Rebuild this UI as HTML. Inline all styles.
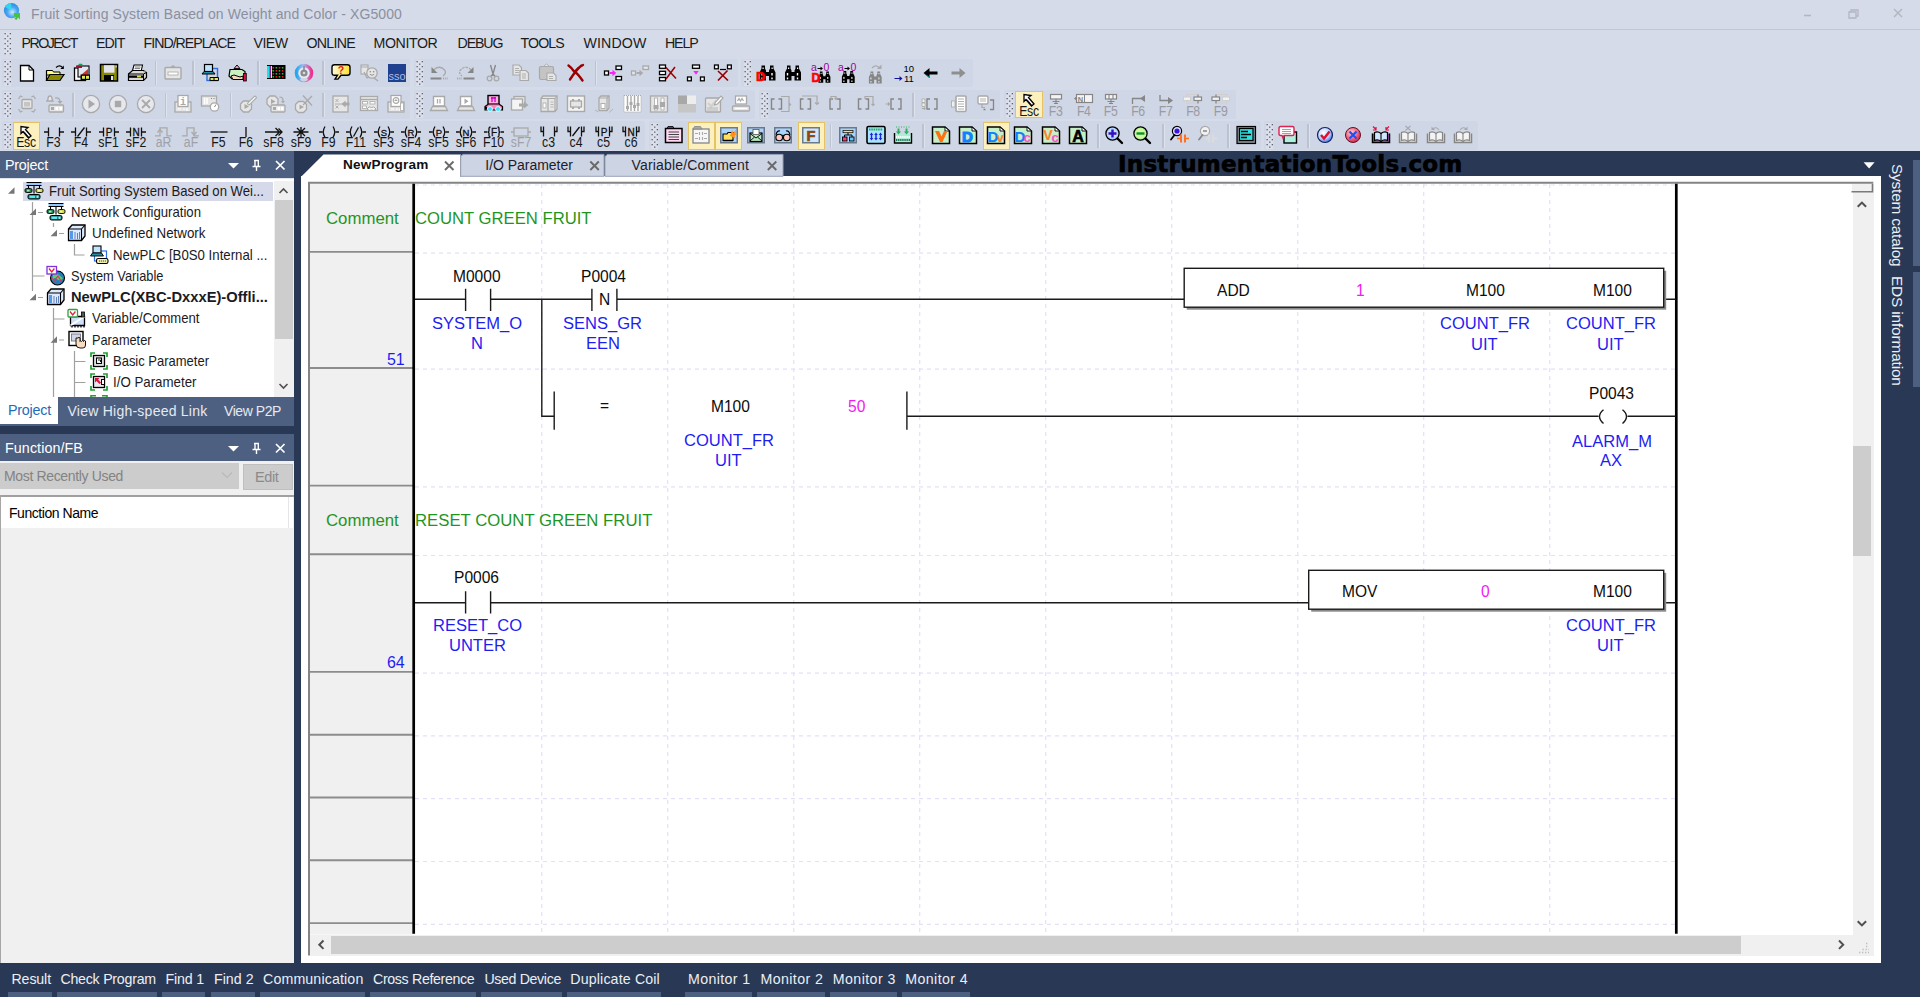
<!DOCTYPE html>
<html><head><meta charset="utf-8"><title>Fruit Sorting System Based on Weight and Color - XG5000</title>
<style>
html,body{margin:0;padding:0}
body{width:1920px;height:997px;position:relative;overflow:hidden;background:#d6dbe9;font-family:"Liberation Sans",sans-serif}
.t{position:absolute;white-space:pre;line-height:1}
.b{position:absolute}
svg{position:absolute;overflow:visible}
.lad text{font-family:"Liberation Sans",sans-serif}
</style></head><body>

<!-- title bar -->
<svg style="left:3px;top:2px" width="20" height="20" viewBox="0 0 20 20">
<defs><radialGradient id="gl" cx="0.55" cy="0.6" r="0.65"><stop offset="0" stop-color="#cfe8ff"/><stop offset="0.5" stop-color="#4aa6f2"/><stop offset="1" stop-color="#1f86e0"/></radialGradient></defs>
<circle cx="8.5" cy="8.6" r="7.6" fill="url(#gl)"/>
<path d="M8.5 8.6 L2 5 A7.6 7.6 0 0 1 8.2 1 Z" fill="#2ee0f0" opacity="0.85"/>
<path d="M11 11 h6 v6.5 l-2 -2 l-1.5 2.6 l-2 -1 l1.5 -2.5 h-2z" fill="#43c63c"/>
</svg>
<span class="t" style="left:31.00px;top:6.95px;font-size:14px;color:#8a90a0;letter-spacing:0.100px;">Fruit Sorting System Based on Weight and Color - XG5000</span>
<div class="b" style="left:0px;top:29px;width:1920px;height:1px;background:#c3c7d1;"></div>
<svg style="left:1795px;top:4px" width="120" height="20" viewBox="0 0 120 20" fill="none" stroke="#b3b7c1" stroke-width="1.3">
<path d="M9 11.5 h7" stroke-width="1.6"/>
<path d="M54 8 h7 v6 h-7z M56 8 v-2 h7 v6 h-2"/>
<path d="M99 5 l8 8 M107 5 l-8 8" stroke-width="1.5"/>
</svg>
<!-- menu bar -->
<svg style="left:3.5px;top:32px" width="8" height="22.5" viewBox="0 0 8 22.5"><rect x="-0.3" y="0" width="7.600" height="22.5" fill="#dde1ec" opacity="0.8"/><g fill="#5d616b"><rect x="0.5" y="1.0" width="1.3" height="1.3"/><rect x="5.7" y="1.0" width="1.3" height="1.3"/><rect x="3.1" y="3.5" width="1.3" height="1.3"/><rect x="0.5" y="6.0" width="1.3" height="1.3"/><rect x="5.7" y="6.0" width="1.3" height="1.3"/><rect x="3.1" y="8.5" width="1.3" height="1.3"/><rect x="0.5" y="11.0" width="1.3" height="1.3"/><rect x="5.7" y="11.0" width="1.3" height="1.3"/><rect x="3.1" y="13.5" width="1.3" height="1.3"/><rect x="0.5" y="16.0" width="1.3" height="1.3"/><rect x="5.7" y="16.0" width="1.3" height="1.3"/><rect x="3.1" y="18.5" width="1.3" height="1.3"/><rect x="0.5" y="21.0" width="1.3" height="1.3"/><rect x="5.7" y="21.0" width="1.3" height="1.3"/></g></svg>
<span class="t" style="left:21.50px;top:35.58px;font-size:14.2px;color:#1b1b1b;letter-spacing:-1.539px;">PROJECT</span>
<span class="t" style="left:96.00px;top:35.58px;font-size:14.2px;color:#1b1b1b;letter-spacing:-0.961px;">EDIT</span>
<span class="t" style="left:143.50px;top:35.58px;font-size:14.2px;color:#1b1b1b;letter-spacing:-0.989px;">FIND/REPLACE</span>
<span class="t" style="left:253.50px;top:35.58px;font-size:14.2px;color:#1b1b1b;letter-spacing:-0.573px;">VIEW</span>
<span class="t" style="left:306.50px;top:35.58px;font-size:14.2px;color:#1b1b1b;letter-spacing:-0.728px;">ONLINE</span>
<span class="t" style="left:373.50px;top:35.58px;font-size:14.2px;color:#1b1b1b;letter-spacing:-0.399px;">MONITOR</span>
<span class="t" style="left:457.50px;top:35.58px;font-size:14.2px;color:#1b1b1b;letter-spacing:-1.100px;">DEBUG</span>
<span class="t" style="left:520.50px;top:35.58px;font-size:14.2px;color:#1b1b1b;letter-spacing:-0.875px;">TOOLS</span>
<span class="t" style="left:583.50px;top:35.58px;font-size:14.2px;color:#1b1b1b;letter-spacing:0.116px;">WINDOW</span>
<span class="t" style="left:665.00px;top:35.58px;font-size:14.2px;color:#1b1b1b;letter-spacing:-1.149px;">HELP</span>
<!-- toolbars -->
<div class="b" style="left:2px;top:58.8px;width:408px;height:28.5px;background:#cfd6e5;border-radius:2px;"></div>
<div class="b" style="left:414px;top:58.8px;width:323.5px;height:28.5px;background:#cfd6e5;border-radius:2px;"></div>
<div class="b" style="left:741px;top:58.8px;width:231.5px;height:28.5px;background:#cfd6e5;border-radius:2px;"></div>
<div class="b" style="left:2px;top:90px;width:408px;height:28.5px;background:#cfd6e5;border-radius:2px;"></div>
<div class="b" style="left:414px;top:90px;width:341px;height:28.5px;background:#cfd6e5;border-radius:2px;"></div>
<div class="b" style="left:759px;top:90px;width:241px;height:28.5px;background:#cfd6e5;border-radius:2px;"></div>
<div class="b" style="left:1004px;top:90px;width:231.5999999999999px;height:28.5px;background:#cfd6e5;border-radius:2px;"></div>
<div class="b" style="left:2px;top:121.3px;width:643px;height:28.5px;background:#cfd6e5;border-radius:2px;"></div>
<div class="b" style="left:649px;top:121.3px;width:611.5999999999999px;height:28.5px;background:#cfd6e5;border-radius:2px;"></div>
<div class="b" style="left:1264px;top:121.3px;width:214px;height:28.5px;background:#cfd6e5;border-radius:2px;"></div>
<svg style="left:3.5px;top:60px" width="8" height="26" viewBox="0 0 8 26"><rect x="-0.3" y="0" width="7.600" height="26" fill="#dde1ec" opacity="0.8"/><g fill="#5d616b"><rect x="0.5" y="1.0" width="1.3" height="1.3"/><rect x="5.7" y="1.0" width="1.3" height="1.3"/><rect x="3.1" y="3.5" width="1.3" height="1.3"/><rect x="0.5" y="6.0" width="1.3" height="1.3"/><rect x="5.7" y="6.0" width="1.3" height="1.3"/><rect x="3.1" y="8.5" width="1.3" height="1.3"/><rect x="0.5" y="11.0" width="1.3" height="1.3"/><rect x="5.7" y="11.0" width="1.3" height="1.3"/><rect x="3.1" y="13.5" width="1.3" height="1.3"/><rect x="0.5" y="16.0" width="1.3" height="1.3"/><rect x="5.7" y="16.0" width="1.3" height="1.3"/><rect x="3.1" y="18.5" width="1.3" height="1.3"/><rect x="0.5" y="21.0" width="1.3" height="1.3"/><rect x="5.7" y="21.0" width="1.3" height="1.3"/><rect x="3.1" y="23.5" width="1.3" height="1.3"/></g></svg>
<svg style="left:416px;top:60px" width="8" height="26" viewBox="0 0 8 26"><rect x="-0.3" y="0" width="7.600" height="26" fill="#dde1ec" opacity="0.8"/><g fill="#5d616b"><rect x="0.5" y="1.0" width="1.3" height="1.3"/><rect x="5.7" y="1.0" width="1.3" height="1.3"/><rect x="3.1" y="3.5" width="1.3" height="1.3"/><rect x="0.5" y="6.0" width="1.3" height="1.3"/><rect x="5.7" y="6.0" width="1.3" height="1.3"/><rect x="3.1" y="8.5" width="1.3" height="1.3"/><rect x="0.5" y="11.0" width="1.3" height="1.3"/><rect x="5.7" y="11.0" width="1.3" height="1.3"/><rect x="3.1" y="13.5" width="1.3" height="1.3"/><rect x="0.5" y="16.0" width="1.3" height="1.3"/><rect x="5.7" y="16.0" width="1.3" height="1.3"/><rect x="3.1" y="18.5" width="1.3" height="1.3"/><rect x="0.5" y="21.0" width="1.3" height="1.3"/><rect x="5.7" y="21.0" width="1.3" height="1.3"/><rect x="3.1" y="23.5" width="1.3" height="1.3"/></g></svg>
<svg style="left:743.5px;top:60px" width="8" height="26" viewBox="0 0 8 26"><rect x="-0.3" y="0" width="7.600" height="26" fill="#dde1ec" opacity="0.8"/><g fill="#5d616b"><rect x="0.5" y="1.0" width="1.3" height="1.3"/><rect x="5.7" y="1.0" width="1.3" height="1.3"/><rect x="3.1" y="3.5" width="1.3" height="1.3"/><rect x="0.5" y="6.0" width="1.3" height="1.3"/><rect x="5.7" y="6.0" width="1.3" height="1.3"/><rect x="3.1" y="8.5" width="1.3" height="1.3"/><rect x="0.5" y="11.0" width="1.3" height="1.3"/><rect x="5.7" y="11.0" width="1.3" height="1.3"/><rect x="3.1" y="13.5" width="1.3" height="1.3"/><rect x="0.5" y="16.0" width="1.3" height="1.3"/><rect x="5.7" y="16.0" width="1.3" height="1.3"/><rect x="3.1" y="18.5" width="1.3" height="1.3"/><rect x="0.5" y="21.0" width="1.3" height="1.3"/><rect x="5.7" y="21.0" width="1.3" height="1.3"/><rect x="3.1" y="23.5" width="1.3" height="1.3"/></g></svg>
<svg style="left:3.5px;top:91.5px" width="8" height="26" viewBox="0 0 8 26"><rect x="-0.3" y="0" width="7.600" height="26" fill="#dde1ec" opacity="0.8"/><g fill="#5d616b"><rect x="0.5" y="1.0" width="1.3" height="1.3"/><rect x="5.7" y="1.0" width="1.3" height="1.3"/><rect x="3.1" y="3.5" width="1.3" height="1.3"/><rect x="0.5" y="6.0" width="1.3" height="1.3"/><rect x="5.7" y="6.0" width="1.3" height="1.3"/><rect x="3.1" y="8.5" width="1.3" height="1.3"/><rect x="0.5" y="11.0" width="1.3" height="1.3"/><rect x="5.7" y="11.0" width="1.3" height="1.3"/><rect x="3.1" y="13.5" width="1.3" height="1.3"/><rect x="0.5" y="16.0" width="1.3" height="1.3"/><rect x="5.7" y="16.0" width="1.3" height="1.3"/><rect x="3.1" y="18.5" width="1.3" height="1.3"/><rect x="0.5" y="21.0" width="1.3" height="1.3"/><rect x="5.7" y="21.0" width="1.3" height="1.3"/><rect x="3.1" y="23.5" width="1.3" height="1.3"/></g></svg>
<svg style="left:416px;top:91.5px" width="8" height="26" viewBox="0 0 8 26"><rect x="-0.3" y="0" width="7.600" height="26" fill="#dde1ec" opacity="0.8"/><g fill="#5d616b"><rect x="0.5" y="1.0" width="1.3" height="1.3"/><rect x="5.7" y="1.0" width="1.3" height="1.3"/><rect x="3.1" y="3.5" width="1.3" height="1.3"/><rect x="0.5" y="6.0" width="1.3" height="1.3"/><rect x="5.7" y="6.0" width="1.3" height="1.3"/><rect x="3.1" y="8.5" width="1.3" height="1.3"/><rect x="0.5" y="11.0" width="1.3" height="1.3"/><rect x="5.7" y="11.0" width="1.3" height="1.3"/><rect x="3.1" y="13.5" width="1.3" height="1.3"/><rect x="0.5" y="16.0" width="1.3" height="1.3"/><rect x="5.7" y="16.0" width="1.3" height="1.3"/><rect x="3.1" y="18.5" width="1.3" height="1.3"/><rect x="0.5" y="21.0" width="1.3" height="1.3"/><rect x="5.7" y="21.0" width="1.3" height="1.3"/><rect x="3.1" y="23.5" width="1.3" height="1.3"/></g></svg>
<svg style="left:761px;top:91.5px" width="8" height="26" viewBox="0 0 8 26"><rect x="-0.3" y="0" width="7.600" height="26" fill="#dde1ec" opacity="0.8"/><g fill="#5d616b"><rect x="0.5" y="1.0" width="1.3" height="1.3"/><rect x="5.7" y="1.0" width="1.3" height="1.3"/><rect x="3.1" y="3.5" width="1.3" height="1.3"/><rect x="0.5" y="6.0" width="1.3" height="1.3"/><rect x="5.7" y="6.0" width="1.3" height="1.3"/><rect x="3.1" y="8.5" width="1.3" height="1.3"/><rect x="0.5" y="11.0" width="1.3" height="1.3"/><rect x="5.7" y="11.0" width="1.3" height="1.3"/><rect x="3.1" y="13.5" width="1.3" height="1.3"/><rect x="0.5" y="16.0" width="1.3" height="1.3"/><rect x="5.7" y="16.0" width="1.3" height="1.3"/><rect x="3.1" y="18.5" width="1.3" height="1.3"/><rect x="0.5" y="21.0" width="1.3" height="1.3"/><rect x="5.7" y="21.0" width="1.3" height="1.3"/><rect x="3.1" y="23.5" width="1.3" height="1.3"/></g></svg>
<svg style="left:1005.6px;top:91.5px" width="8" height="26" viewBox="0 0 8 26"><rect x="-0.3" y="0" width="7.600" height="26" fill="#dde1ec" opacity="0.8"/><g fill="#5d616b"><rect x="0.5" y="1.0" width="1.3" height="1.3"/><rect x="5.7" y="1.0" width="1.3" height="1.3"/><rect x="3.1" y="3.5" width="1.3" height="1.3"/><rect x="0.5" y="6.0" width="1.3" height="1.3"/><rect x="5.7" y="6.0" width="1.3" height="1.3"/><rect x="3.1" y="8.5" width="1.3" height="1.3"/><rect x="0.5" y="11.0" width="1.3" height="1.3"/><rect x="5.7" y="11.0" width="1.3" height="1.3"/><rect x="3.1" y="13.5" width="1.3" height="1.3"/><rect x="0.5" y="16.0" width="1.3" height="1.3"/><rect x="5.7" y="16.0" width="1.3" height="1.3"/><rect x="3.1" y="18.5" width="1.3" height="1.3"/><rect x="0.5" y="21.0" width="1.3" height="1.3"/><rect x="5.7" y="21.0" width="1.3" height="1.3"/><rect x="3.1" y="23.5" width="1.3" height="1.3"/></g></svg>
<svg style="left:3.5px;top:122.5px" width="8" height="26" viewBox="0 0 8 26"><rect x="-0.3" y="0" width="7.600" height="26" fill="#dde1ec" opacity="0.8"/><g fill="#5d616b"><rect x="0.5" y="1.0" width="1.3" height="1.3"/><rect x="5.7" y="1.0" width="1.3" height="1.3"/><rect x="3.1" y="3.5" width="1.3" height="1.3"/><rect x="0.5" y="6.0" width="1.3" height="1.3"/><rect x="5.7" y="6.0" width="1.3" height="1.3"/><rect x="3.1" y="8.5" width="1.3" height="1.3"/><rect x="0.5" y="11.0" width="1.3" height="1.3"/><rect x="5.7" y="11.0" width="1.3" height="1.3"/><rect x="3.1" y="13.5" width="1.3" height="1.3"/><rect x="0.5" y="16.0" width="1.3" height="1.3"/><rect x="5.7" y="16.0" width="1.3" height="1.3"/><rect x="3.1" y="18.5" width="1.3" height="1.3"/><rect x="0.5" y="21.0" width="1.3" height="1.3"/><rect x="5.7" y="21.0" width="1.3" height="1.3"/><rect x="3.1" y="23.5" width="1.3" height="1.3"/></g></svg>
<svg style="left:651px;top:122.5px" width="8" height="26" viewBox="0 0 8 26"><rect x="-0.3" y="0" width="7.600" height="26" fill="#dde1ec" opacity="0.8"/><g fill="#5d616b"><rect x="0.5" y="1.0" width="1.3" height="1.3"/><rect x="5.7" y="1.0" width="1.3" height="1.3"/><rect x="3.1" y="3.5" width="1.3" height="1.3"/><rect x="0.5" y="6.0" width="1.3" height="1.3"/><rect x="5.7" y="6.0" width="1.3" height="1.3"/><rect x="3.1" y="8.5" width="1.3" height="1.3"/><rect x="0.5" y="11.0" width="1.3" height="1.3"/><rect x="5.7" y="11.0" width="1.3" height="1.3"/><rect x="3.1" y="13.5" width="1.3" height="1.3"/><rect x="0.5" y="16.0" width="1.3" height="1.3"/><rect x="5.7" y="16.0" width="1.3" height="1.3"/><rect x="3.1" y="18.5" width="1.3" height="1.3"/><rect x="0.5" y="21.0" width="1.3" height="1.3"/><rect x="5.7" y="21.0" width="1.3" height="1.3"/><rect x="3.1" y="23.5" width="1.3" height="1.3"/></g></svg>
<svg style="left:1266px;top:122.5px" width="8" height="26" viewBox="0 0 8 26"><rect x="-0.3" y="0" width="7.600" height="26" fill="#dde1ec" opacity="0.8"/><g fill="#5d616b"><rect x="0.5" y="1.0" width="1.3" height="1.3"/><rect x="5.7" y="1.0" width="1.3" height="1.3"/><rect x="3.1" y="3.5" width="1.3" height="1.3"/><rect x="0.5" y="6.0" width="1.3" height="1.3"/><rect x="5.7" y="6.0" width="1.3" height="1.3"/><rect x="3.1" y="8.5" width="1.3" height="1.3"/><rect x="0.5" y="11.0" width="1.3" height="1.3"/><rect x="5.7" y="11.0" width="1.3" height="1.3"/><rect x="3.1" y="13.5" width="1.3" height="1.3"/><rect x="0.5" y="16.0" width="1.3" height="1.3"/><rect x="5.7" y="16.0" width="1.3" height="1.3"/><rect x="3.1" y="18.5" width="1.3" height="1.3"/><rect x="0.5" y="21.0" width="1.3" height="1.3"/><rect x="5.7" y="21.0" width="1.3" height="1.3"/><rect x="3.1" y="23.5" width="1.3" height="1.3"/></g></svg>
<svg style="left:17.00px;top:63.00px" width="20" height="20" viewBox="0 0 20 20"><path d="M3.5 2.5 h8.5 l4.5 4.5 v11 h-13z" fill="#fff" stroke="#000" stroke-width="1.3"/><path d="M12 2.5 v4.5 h4.5" fill="none" stroke="#000" stroke-width="1"/></svg>
<svg style="left:44.50px;top:63.00px" width="20" height="20" viewBox="0 0 20 20"><path d="M1.5 7.5 h6 l1 1.5 h6.5 v3 h-13.5z" fill="#ffff80" stroke="#000" stroke-width="1"/><path d="M1.5 17.5 l3.5 -6 h14 l-4 6z" fill="#8a8a00" stroke="#000" stroke-width="1.2"/><path d="M1.5 17.5 v-10" stroke="#000" stroke-width="1.2"/><path d="M11 4.5 q4 -3.5 7 0.5" fill="none" stroke="#000" stroke-width="1.2"/><path d="M18.8 2.5 v3.5 h-3.5z" fill="#000"/></svg>
<svg style="left:72.00px;top:63.00px" width="20" height="20" viewBox="0 0 20 20"><rect x="2.5" y="5" width="11" height="12.5" fill="#fff" stroke="#000" stroke-width="1.3"/><rect x="6" y="3" width="11" height="11" fill="#dfe8f5" stroke="#000" stroke-width="1.1"/><rect x="4" y="2.5" width="6" height="2.5" fill="#a01030"/><rect x="6.5" y="0.8" width="4" height="1.8" rx="0.9" fill="#10a060"/><path d="M9 12 l7 -6 v6z" fill="#d03030"/><rect x="8.5" y="11.5" width="9.5" height="5.5" fill="#000"/><rect x="10" y="12.8" width="3" height="3" fill="#d8e860"/><rect x="14" y="12.8" width="3" height="3" fill="#d8e860"/></svg>
<svg style="left:99.00px;top:63.00px" width="20" height="20" viewBox="0 0 20 20"><rect x="1.5" y="1.5" width="17" height="16.5" fill="#8a8a00" stroke="#000" stroke-width="1.5"/><rect x="5" y="2.2" width="10.5" height="7.5" fill="#e4e4ec"/><rect x="5" y="12" width="10" height="6" fill="#000"/><rect x="12" y="13" width="2.3" height="4" fill="#e4e4ec"/><rect x="16.5" y="2.5" width="1.2" height="2" fill="#e4e4ec"/></svg>
<svg style="left:126.50px;top:63.00px" width="20" height="20" viewBox="0 0 20 20"><path d="M5.5 7.5 l1.5 -5.5 h8.5 l-1.2 5.5z" fill="#fff" stroke="#000" stroke-width="1.1"/><path d="M8 4 h5.5 M7.6 5.6 h5.5" stroke="#555" stroke-width="0.8"/><path d="M1.5 11 l4 -3.5 h11 l3 2 v5 l-3 3 h-15z" fill="#d9d9d9" stroke="#000" stroke-width="1.2"/><path d="M1.5 11 h15 l3 -1.5 M16.5 11 v6.5" stroke="#000" stroke-width="1" fill="none"/><rect x="2" y="12.5" width="14.5" height="2.3" fill="#000"/><rect x="10" y="12.6" width="4" height="1.8" fill="#e0e040"/><circle cx="17.8" cy="8.5" r="1.1" fill="#888"/></svg>
<div class="b" style="left:154.8px;top:61px;width:1.4px;height:24px;background:#bcc2d0;"></div><div class="b" style="left:156.2px;top:61px;width:1px;height:24px;background:#dfe3ee;"></div>
<svg style="left:163.00px;top:63.00px" width="20" height="20" viewBox="0 0 20 20"><rect x="2" y="4.5" width="16" height="11.5" rx="1" fill="#e6e6e6" stroke="#a9a9a9" stroke-width="1.4"/><path d="M7 4.5 l3 -2.5 l3 2.5z" fill="#a9a9a9"/><rect x="5" y="9" width="10" height="3" fill="#fff" stroke="#a9a9a9" stroke-width="0.8"/></svg>
<div class="b" style="left:192.3px;top:61px;width:1.4px;height:24px;background:#bcc2d0;"></div><div class="b" style="left:193.7px;top:61px;width:1px;height:24px;background:#dfe3ee;"></div>
<svg style="left:200.00px;top:63.00px" width="20" height="20" viewBox="0 0 20 20"><rect x="7" y="5.5" width="10.5" height="12" fill="none" stroke="#2a6fe8" stroke-width="1.4"/><rect x="4.5" y="1.5" width="8" height="7" fill="#bfe4ff" stroke="#000" stroke-width="1.2"/><path d="M2 11 l2 -2.5 h9 l2 2.5z" fill="#2a8aa0" stroke="#000" stroke-width="1"/><rect x="9.5" y="14" width="9.5" height="4" rx="1" fill="#000"/><rect x="10.5" y="15" width="3" height="2" fill="#d8e860"/><rect x="14.5" y="15" width="3.5" height="2" fill="#d8e860"/></svg>
<svg style="left:228.00px;top:63.00px" width="20" height="20" viewBox="0 0 20 20"><path d="M2 6.5 h12 l3 2 v4.5 l-6 3 h-7 l-3 -3z" fill="#c8f0c0" stroke="#000" stroke-width="1.2"/><path d="M6 5.5 l3 -3.5 l3 3.5z" fill="#f0a0c0" stroke="#000" stroke-width="0.9"/><path d="M3 13 q3 -2 6 0 t6 0 v3.5 h-10z" fill="#f4d8b8" stroke="#000" stroke-width="1"/><rect x="15.5" y="10.5" width="2.8" height="7.5" fill="#d01040" stroke="#000" stroke-width="0.8"/></svg>
<div class="b" style="left:257.3px;top:61px;width:1.4px;height:24px;background:#bcc2d0;"></div><div class="b" style="left:258.7px;top:61px;width:1px;height:24px;background:#dfe3ee;"></div>
<svg style="left:265.60px;top:63.00px" width="20" height="20" viewBox="0 0 20 20"><rect x="1" y="2" width="18.5" height="14" fill="#000"/><rect x="1" y="3" width="2" height="12" fill="#20e0e0"/><rect x="3" y="3" width="1.6" height="12" fill="#e040e0"/><rect x="5" y="3" width="1" height="12" fill="#ddd"/><rect x="6.5" y="4.0" width="1.6" height="1.6" fill="#e02020"/><rect x="9.6" y="4.0" width="1.6" height="1.6" fill="#20c020"/><rect x="12.7" y="4.0" width="1.6" height="1.6" fill="#e02020"/><rect x="15.8" y="4.0" width="1.6" height="1.6" fill="#20c020"/><rect x="6.5" y="7.0" width="1.6" height="1.6" fill="#20c020"/><rect x="9.6" y="7.0" width="1.6" height="1.6" fill="#e02020"/><rect x="12.7" y="7.0" width="1.6" height="1.6" fill="#20c020"/><rect x="15.8" y="7.0" width="1.6" height="1.6" fill="#e02020"/><rect x="6.5" y="10.0" width="1.6" height="1.6" fill="#e02020"/><rect x="9.6" y="10.0" width="1.6" height="1.6" fill="#20c020"/><rect x="12.7" y="10.0" width="1.6" height="1.6" fill="#e02020"/><rect x="15.8" y="10.0" width="1.6" height="1.6" fill="#20c020"/><rect x="6.5" y="13.0" width="1.6" height="1.6" fill="#20c020"/><rect x="9.6" y="13.0" width="1.6" height="1.6" fill="#e02020"/><rect x="12.7" y="13.0" width="1.6" height="1.6" fill="#20c020"/><rect x="15.8" y="13.0" width="1.6" height="1.6" fill="#e02020"/></svg>
<svg style="left:293.75px;top:63.00px" width="20" height="20" viewBox="0 0 20 20"><defs><linearGradient id="rg" x1="0" x2="1"><stop offset="0" stop-color="#20a8f0"/><stop offset="0.45" stop-color="#a8b8f0"/><stop offset="1" stop-color="#f03090"/></linearGradient></defs><circle cx="10" cy="10" r="7.6" fill="none" stroke="url(#rg)" stroke-width="3.4"/><circle cx="10" cy="10" r="5.2" fill="#e9ecf3"/><circle cx="10" cy="10" r="3.6" fill="#8b8b93"/><circle cx="10" cy="10" r="1.3" fill="#d9d9e0"/><rect x="9.2" y="3" width="1.6" height="4.5" fill="#8b8b93"/><path d="M6 17 q4 2.5 8 0 l-1 -2 h-6z" fill="#d4d4dc"/></svg>
<div class="b" style="left:322.3px;top:61px;width:1.4px;height:24px;background:#bcc2d0;"></div><div class="b" style="left:323.7px;top:61px;width:1px;height:24px;background:#dfe3ee;"></div>
<svg style="left:330.60px;top:63.00px" width="20" height="20" viewBox="0 0 20 20"><defs><linearGradient id="sg" x1="0" x2="1"><stop offset="0" stop-color="#fffbe0"/><stop offset="1" stop-color="#ffe030"/></linearGradient></defs><path d="M3.5 1.8 h13 q2.5 0 2.5 2.5 v5.5 q0 2.5 -2.5 2.5 h-6.5 l-3 3.8 h-3 l2.5 -3.8 h-3 q-2.5 0 -2.5 -2.5 v-5.500 q0 -2.500 2.500 -2.500z" fill="url(#sg)" stroke="#000" stroke-width="1.4"/><text x="10" y="10.8" font-size="10.5" font-weight="bold" font-family="Liberation Sans,sans-serif" fill="#e02020" text-anchor="middle">?</text></svg>
<svg style="left:359.40px;top:63.00px" width="20" height="20" viewBox="0 0 20 20"><rect x="2" y="2" width="7" height="9" fill="#e6e6e6" stroke="#a9a9a9" stroke-width="1.1"/><path d="M2 4 h7" stroke="#a9a9a9" stroke-width="1"/><path d="M5 9 l3 6 l2 -1" fill="none" stroke="#a9a9a9" stroke-width="1.2"/><circle cx="13" cy="10" r="5.2" fill="#e6e6e6" stroke="#a9a9a9" stroke-width="1.3"/><circle cx="11.3" cy="8.7" r="0.8" fill="#868686"/><circle cx="14.7" cy="8.7" r="0.8" fill="#868686"/><path d="M10.8 11.3 q2.200 2 4.400 0" fill="none" stroke="#868686" stroke-width="0.9"/><path d="M15 15 l4 3" stroke="#a9a9a9" stroke-width="1.4"/></svg>
<div class="b" style="left:387.5px;top:63.7px;width:18.8px;height:18.5px;background:#1f3f8f;"></div>
<span class="t" style="left:388.50px;top:71.29px;font-size:11px;color:#aebce0;letter-spacing:-0.039px;">sso</span>
<svg style="left:428.50px;top:63.00px" width="20" height="20" viewBox="0 0 20 20"><path d="M5 6.5 q6 -5 11 1 q1.5 3 -2 5.5" fill="none" stroke="#a9a9a9" stroke-width="1.3"/><path d="M2.500 4 v6 h6z" fill="#868686"/><rect x="1.5" y="14.5" width="11" height="2" fill="#868686"/><path d="M14 15.500 h5" stroke="#a9a9a9" stroke-width="2" stroke-dasharray="1.2 1"/></svg>
<svg style="left:456.00px;top:63.00px" width="20" height="20" viewBox="0 0 20 20"><path d="M15 6.5 q-6 -5 -11 1 q-1.5 3 2 5.5" fill="none" stroke="#a9a9a9" stroke-width="1.3" stroke-dasharray="2.5 1"/><path d="M17.500 4 v6 h-6z" fill="#868686"/><rect x="7.5" y="14.5" width="11" height="2" fill="#868686"/><path d="M1 15.500 h5" stroke="#a9a9a9" stroke-width="2" stroke-dasharray="1.2 1"/></svg>
<svg style="left:483.00px;top:63.00px" width="20" height="20" viewBox="0 0 20 20"><path d="M7.5 2 l2.5 9 l2.500 -9 M10 11 l-2.500 3 M10 11 l2.500 3" fill="none" stroke="#868686" stroke-width="1.3"/><circle cx="6.5" cy="15.5" r="2.3" fill="none" stroke="#a9a9a9" stroke-width="1.3"/><circle cx="13.5" cy="15.5" r="2.300" fill="none" stroke="#a9a9a9" stroke-width="1.300"/></svg>
<svg style="left:510.60px;top:63.00px" width="20" height="20" viewBox="0 0 20 20"><path d="M2 2 h6 l2.500 2.500 v7.500 h-8.500z" fill="#e6e6e6" stroke="#a9a9a9" stroke-width="1.2"/><path d="M4 5.500 h4 M4 7.500 h4 M4 9.500 h4" stroke="#a9a9a9" stroke-width="0.9"/><path d="M9 7.500 h6 l2.500 2.500 v7.500 h-8.500z" fill="#e6e6e6" stroke="#a9a9a9" stroke-width="1.200"/><path d="M11 11 h4 M11 13 h4 M11 15 h4" stroke="#a9a9a9" stroke-width="0.900"/></svg>
<svg style="left:538.00px;top:63.00px" width="20" height="20" viewBox="0 0 20 20"><rect x="1.5" y="3.5" width="14" height="13" rx="1.500" fill="#c4c4c4" stroke="#a9a9a9" stroke-width="1.2"/><path d="M5.500 3.500 l3 -2.500 l3 2.500z" fill="#e6e6e6" stroke="#a9a9a9" stroke-width="0.9"/><path d="M9 10 h6.500 l2.500 2.500 v5 h-9z" fill="#e6e6e6" stroke="#a9a9a9" stroke-width="1.100"/><path d="M11 13.500 h4 M11 15.500 h4" stroke="#a9a9a9" stroke-width="0.900"/></svg>
<svg style="left:565.60px;top:63.00px" width="20" height="20" viewBox="0 0 20 20"><path d="M2.500 2.500 q3 2 6 6.500 q4 -5 8.500 -7 M15.500 2.500 q-5 4 -11.500 14 M9 9 q3 2 7.500 8.500" fill="none" stroke="#9a0000" stroke-width="2.4" stroke-linecap="round"/></svg>
<div class="b" style="left:594.9px;top:61px;width:1.4px;height:24px;background:#bcc2d0;"></div><div class="b" style="left:596.3000000000001px;top:61px;width:1px;height:24px;background:#dfe3ee;"></div>
<svg style="left:603.00px;top:63.00px" width="20" height="20" viewBox="0 0 20 20"><rect x="1.500" y="8" width="4" height="4" fill="#fff" stroke="#000" stroke-width="1.3"/><rect x="13" y="3" width="5.500" height="3.500" fill="#fff" stroke="#000" stroke-width="1.3"/><rect x="13" y="13.500" width="5.500" height="3.500" fill="#fff" stroke="#000" stroke-width="1.300"/><path d="M6.500 9 h3 v-2.200 l3.700 3.200 l-3.700 3.200 v-2.200 h-3z" fill="#ff20ff"/></svg>
<svg style="left:630.00px;top:63.00px" width="20" height="20" viewBox="0 0 20 20"><rect x="1.500" y="8" width="4" height="4" fill="#e6e6e6" stroke="#a9a9a9" stroke-width="1.3"/><rect x="13" y="3" width="5.500" height="3.500" fill="#e6e6e6" stroke="#a9a9a9" stroke-width="1.3"/><path d="M6.500 9 h3 v-2.200 l3.700 3.200 l-3.700 3.200 v-2.200 h-3z" fill="#a9a9a9"/></svg>
<svg style="left:657.50px;top:63.00px" width="20" height="20" viewBox="0 0 20 20"><rect x="1.500" y="2" width="6" height="3.300" fill="#fff" stroke="#000" stroke-width="1.3"/><rect x="1.500" y="8.300" width="6" height="3.300" fill="#fff" stroke="#000" stroke-width="1.300"/><rect x="1.500" y="14.500" width="6" height="3.300" fill="#fff" stroke="#000" stroke-width="1.300"/><path d="M8 4.500 l10 11 M17 4 l-9 12" stroke="#9a0000" stroke-width="1.500"/></svg>
<svg style="left:685.60px;top:63.00px" width="20" height="20" viewBox="0 0 20 20"><rect x="6.500" y="2" width="7" height="3.300" fill="#fff" stroke="#000" stroke-width="1.300"/><rect x="1.500" y="14" width="3.800" height="3.800" fill="#fff" stroke="#000" stroke-width="1.300"/><rect x="14.500" y="14" width="3.800" height="3.800" fill="#fff" stroke="#000" stroke-width="1.300"/><path d="M7.300 8 h5.400 l-2.700 3.800z" fill="#ff20ff"/></svg>
<svg style="left:713.00px;top:63.00px" width="20" height="20" viewBox="0 0 20 20"><rect x="1.500" y="2" width="3.800" height="3.800" fill="#fff" stroke="#000" stroke-width="1.300"/><rect x="14.500" y="2" width="3.800" height="3.800" fill="#fff" stroke="#000" stroke-width="1.300"/><path d="M7 6.500 h6" stroke="#000" stroke-width="1.2"/><path d="M5 8 l10 9.500 M14.500 7.500 l-9.500 10" stroke="#9a0000" stroke-width="1.700"/></svg>
<svg style="left:755.60px;top:63.00px" width="20" height="20" viewBox="0 0 20 20"><g transform="translate(3 2) scale(1.0)"><path d="M0.500 15.500 v-8 l2 -4 v-3 h3.500 v3 l1 2 v1.500 h3 v-1.500 l1 -2 v-3 h3.500 v3 l2 4 v8 h-6.500 v-4.500 h-3 v4.500z" fill="#000"/><rect x="2.300" y="8" width="1.400" height="2.500" fill="#fff"/><rect x="12.300" y="8" width="1.400" height="2.500" fill="#fff"/><rect x="2.300" y="12.500" width="1.400" height="1.800" fill="#fff"/><rect x="12.300" y="12.500" width="1.400" height="1.800" fill="#fff"/><rect x="3.500" y="2.500" width="1.200" height="1.500" fill="#fff"/><rect x="12.500" y="2.500" width="1.200" height="1.500" fill="#fff"/></g><text x="0" y="18" font-size="13" font-family="Liberation Sans,sans-serif" font-weight="bold" fill="#ff0000" stroke="#ff0000" stroke-width="0.6">D</text></svg>
<svg style="left:783.00px;top:63.00px" width="20" height="20" viewBox="0 0 20 20"><g transform="translate(1.5 2) scale(1.0)"><path d="M0.500 15.500 v-8 l2 -4 v-3 h3.500 v3 l1 2 v1.500 h3 v-1.500 l1 -2 v-3 h3.500 v3 l2 4 v8 h-6.500 v-4.500 h-3 v4.500z" fill="#000"/><rect x="2.300" y="8" width="1.400" height="2.500" fill="#fff"/><rect x="12.300" y="8" width="1.400" height="2.500" fill="#fff"/><rect x="2.300" y="12.500" width="1.400" height="1.800" fill="#fff"/><rect x="12.300" y="12.500" width="1.400" height="1.800" fill="#fff"/><rect x="3.500" y="2.500" width="1.200" height="1.500" fill="#fff"/><rect x="12.500" y="2.500" width="1.200" height="1.500" fill="#fff"/></g></svg>
<svg style="left:810.60px;top:63.00px" width="20" height="20" viewBox="0 0 20 20"><g transform="translate(7 8) scale(0.75)"><path d="M0.500 15.500 v-8 l2 -4 v-3 h3.500 v3 l1 2 v1.500 h3 v-1.500 l1 -2 v-3 h3.500 v3 l2 4 v8 h-6.500 v-4.500 h-3 v4.500z" fill="#000"/><rect x="2.300" y="8" width="1.400" height="2.500" fill="#fff"/><rect x="12.300" y="8" width="1.400" height="2.500" fill="#fff"/><rect x="2.300" y="12.500" width="1.400" height="1.800" fill="#fff"/><rect x="12.300" y="12.500" width="1.400" height="1.800" fill="#fff"/><rect x="3.500" y="2.500" width="1.200" height="1.500" fill="#fff"/><rect x="12.500" y="2.500" width="1.200" height="1.500" fill="#fff"/></g><text x="0" y="8" font-size="10.5" font-family="Liberation Sans,sans-serif" fill="#a000a0">a</text><path d="M6.500 5 h3 v-1.500 l2.500 2 l-2.500 2 v-1.500 h-3z" fill="#000"/><text x="12.500" y="8" font-size="10.500" font-family="Liberation Sans,sans-serif" fill="#a000a0">0</text><text x="0.500" y="19" font-size="12" font-family="Liberation Sans,sans-serif" font-weight="bold" fill="#ff0000" stroke="#ff0000" stroke-width="0.600">D</text></svg>
<svg style="left:838.00px;top:63.00px" width="20" height="20" viewBox="0 0 20 20"><g transform="translate(3.5 7.5) scale(0.8)"><path d="M0.500 15.500 v-8 l2 -4 v-3 h3.500 v3 l1 2 v1.500 h3 v-1.500 l1 -2 v-3 h3.500 v3 l2 4 v8 h-6.500 v-4.500 h-3 v4.500z" fill="#000"/><rect x="2.300" y="8" width="1.400" height="2.500" fill="#fff"/><rect x="12.300" y="8" width="1.400" height="2.500" fill="#fff"/><rect x="2.300" y="12.500" width="1.400" height="1.800" fill="#fff"/><rect x="12.300" y="12.500" width="1.400" height="1.800" fill="#fff"/><rect x="3.500" y="2.500" width="1.200" height="1.500" fill="#fff"/><rect x="12.500" y="2.500" width="1.200" height="1.500" fill="#fff"/></g><text x="0" y="8" font-size="10.500" font-family="Liberation Sans,sans-serif" fill="#a000a0">a</text><path d="M6.500 5 h3 v-1.500 l2.500 2 l-2.500 2 v-1.500 h-3z" fill="#000"/><text x="12.500" y="8" font-size="10.500" font-family="Liberation Sans,sans-serif" fill="#a000a0">0</text></svg>
<svg style="left:865.00px;top:63.00px" width="20" height="20" viewBox="0 0 20 20"><g transform="translate(3.5 8) scale(0.8)"><path d="M0.500 15.500 v-8 l2 -4 v-3 h3.500 v3 l1 2 v1.500 h3 v-1.500 l1 -2 v-3 h3.500 v3 l2 4 v8 h-6.500 v-4.500 h-3 v4.500z" fill="#868686"/><rect x="2.300" y="8" width="1.400" height="2.500" fill="#e6e6e6"/><rect x="12.300" y="8" width="1.400" height="2.500" fill="#e6e6e6"/><rect x="2.300" y="12.500" width="1.400" height="1.800" fill="#e6e6e6"/><rect x="12.300" y="12.500" width="1.400" height="1.800" fill="#e6e6e6"/><rect x="3.500" y="2.500" width="1.200" height="1.500" fill="#e6e6e6"/><rect x="12.500" y="2.500" width="1.200" height="1.500" fill="#e6e6e6"/></g><path d="M7 5 q3.500 -4 7 -0.500" fill="none" stroke="#a9a9a9" stroke-width="1.2"/><path d="M16.500 1.500 v4.500 h-4.500z" fill="#a9a9a9"/></svg>
<svg style="left:893.75px;top:63.00px" width="20" height="20" viewBox="0 0 20 20"><text x="9.500" y="9" font-size="9.5" font-family="Liberation Sans,sans-serif" fill="#000">10</text><text x="10" y="18.500" font-size="9.500" font-family="Liberation Sans,sans-serif" fill="#000">11</text><path d="M0.500 15 h5 v-2 l3 2.500 l-3 2.500 v-2 h-5z" fill="#1010a0"/></svg>
<svg style="left:921.00px;top:63.00px" width="20" height="20" viewBox="0 0 20 20"><path d="M2.500 10 l6 -5 v3.500 h8 v3 h-8 v3.500z" fill="#000"/><path d="M2.500 10 l6 5 v-1.500z" fill="#008080"/></svg>
<svg style="left:948.00px;top:63.00px" width="20" height="20" viewBox="0 0 20 20"><path d="M17.500 10 l-6 -5 v3.500 h-8 v3 h8 v3.500z" fill="#8f8f8f"/></svg>
<svg style="left:16.50px;top:94.00px" width="20" height="20" viewBox="0 0 20 20"><rect x="5" y="5.500" width="10" height="9" rx="1" fill="#e6e6e6" stroke="#a9a9a9" stroke-width="1.3"/><path d="M8 8 v4.500 M10 8 v4.500 M12 8 v4.500" stroke="#a9a9a9" stroke-width="1.100"/><path d="M1.500 5 l2 -3 l2 1 M18.500 5 l-2 -3 l-2 1 M1.500 15 l2 3 l2 -1 M18.500 15 l-2 3 l-2 -1" fill="none" stroke="#a9a9a9" stroke-width="1.2"/></svg>
<svg style="left:44.50px;top:94.00px" width="20" height="20" viewBox="0 0 20 20"><path d="M2 7 h6 l-1 -2 q0 -3 -2 -3 q-2 0 -2 3z" fill="#e6e6e6" stroke="#a9a9a9" stroke-width="1.3"/><path d="M10 4 q5 -1 5 4" fill="none" stroke="#a9a9a9" stroke-width="1.2"/><path d="M12.500 7 h5 l-2.500 3z" fill="#a9a9a9"/><rect x="4" y="11" width="14.500" height="7" rx="1" fill="#e6e6e6" stroke="#a9a9a9" stroke-width="1.3"/><rect x="6" y="13" width="3" height="3" fill="#a9a9a9"/><rect x="10.500" y="13" width="2.500" height="3" fill="#fff"/><rect x="14.500" y="13" width="2.500" height="3" fill="#fff"/></svg>
<div class="b" style="left:72.3px;top:92.5px;width:1.4px;height:24px;background:#bcc2d0;"></div><div class="b" style="left:73.7px;top:92.5px;width:1px;height:24px;background:#dfe3ee;"></div>
<svg style="left:80.60px;top:94.00px" width="20" height="20" viewBox="0 0 20 20"><circle cx="10" cy="10" r="8.6" fill="#e6e8ee" stroke="#a9a9a9" stroke-width="1.3"/><path d="M7.500 5.500 l6.500 4.500 l-6.500 4.500z" fill="#a9a9a9"/></svg>
<svg style="left:108.00px;top:94.00px" width="20" height="20" viewBox="0 0 20 20"><circle cx="10" cy="10" r="8.6" fill="#e6e8ee" stroke="#a9a9a9" stroke-width="1.3"/><rect x="6.800" y="6.800" width="6.400" height="6.400" fill="#a9a9a9"/></svg>
<svg style="left:135.60px;top:94.00px" width="20" height="20" viewBox="0 0 20 20"><circle cx="10" cy="10" r="8.6" fill="#e6e8ee" stroke="#a9a9a9" stroke-width="1.3"/><path d="M6 6 l8 8 M14 6 l-8 8" stroke="#a9a9a9" stroke-width="1.800"/></svg>
<div class="b" style="left:164.9px;top:92.5px;width:1.4px;height:24px;background:#bcc2d0;"></div><div class="b" style="left:166.29999999999998px;top:92.5px;width:1px;height:24px;background:#dfe3ee;"></div>
<svg style="left:173.00px;top:94.00px" width="20" height="20" viewBox="0 0 20 20"><rect x="2" y="8" width="16" height="10" fill="#e6e6e6" stroke="#a9a9a9" stroke-width="1.3"/><rect x="5" y="1.500" width="10" height="11" fill="#fff" stroke="#a9a9a9" stroke-width="1.3"/><text x="10" y="11" font-size="10" font-weight="bold" font-family="Liberation Mono,monospace" fill="#a9a9a9" text-anchor="middle">i</text><path d="M5 15 h3 M10 15 h2 M14 14 v3" stroke="#fff" stroke-width="1.200"/></svg>
<svg style="left:200.00px;top:94.00px" width="20" height="20" viewBox="0 0 20 20"><rect x="1.500" y="2" width="15" height="10" fill="#e6e6e6" stroke="#a9a9a9" stroke-width="1.3"/><path d="M4.500 4 v6 M7 4 v6" stroke="#fff" stroke-width="1.500"/><path d="M11 4.500 h1 M13.500 4.500 h1" stroke="#868686" stroke-width="1.200"/><circle cx="14.500" cy="13" r="4.200" fill="#fff" stroke="#a9a9a9" stroke-width="1.300"/><path d="M14.500 13 l1.500 -2.500" stroke="#868686" stroke-width="1"/></svg>
<div class="b" style="left:229.9px;top:92.5px;width:1.4px;height:24px;background:#bcc2d0;"></div><div class="b" style="left:231.29999999999998px;top:92.5px;width:1px;height:24px;background:#dfe3ee;"></div>
<svg style="left:238.75px;top:94.00px" width="20" height="20" viewBox="0 0 20 20"><g transform="translate(-2.500 1)"><path d="M4 9 l3 -3 h5 l3 3 v5 l-3 3 h-5 l-3 -3z" fill="#e6e6e6" stroke="#a9a9a9" stroke-width="1.3"/><path d="M8 9 l4.500 2.500 l-4.500 2.500z" fill="#a9a9a9"/></g><path d="M10 9.500 l6 -6" stroke="#a9a9a9" stroke-width="3.600" stroke-linecap="round"/><path d="M10 9.500 l6 -6" stroke="#f4f4f4" stroke-width="1.500" stroke-linecap="round"/></svg>
<svg style="left:266.00px;top:94.00px" width="20" height="20" viewBox="0 0 20 20"><g transform="translate(-3 -4)"><path d="M4 9 l3 -3 h5 l3 3 v5 l-3 3 h-5 l-3 -3z" fill="#e6e6e6" stroke="#a9a9a9" stroke-width="1.3"/><path d="M8 9 l4.500 2.500 l-4.500 2.500z" fill="#a9a9a9"/></g><path d="M13.500 3 q4 0 3.500 4.500" fill="none" stroke="#a9a9a9" stroke-width="1.2"/><path d="M15 7 h4 l-2 2.500z" fill="#a9a9a9"/><rect x="5" y="11" width="14" height="7" rx="1" fill="#e6e6e6" stroke="#a9a9a9" stroke-width="1.3"/><rect x="7" y="13" width="3" height="3" fill="#a9a9a9"/><rect x="11.500" y="13" width="2.500" height="3" fill="#fff"/><rect x="15" y="13" width="2.500" height="3" fill="#fff"/></svg>
<svg style="left:293.75px;top:94.00px" width="20" height="20" viewBox="0 0 20 20"><g transform="translate(-2.500 1.500)"><path d="M4 9 l3 -3 h5 l3 3 v5 l-3 3 h-5 l-3 -3z" fill="#e6e6e6" stroke="#a9a9a9" stroke-width="1.3"/><path d="M8 9 l4.500 2.500 l-4.500 2.500z" fill="#a9a9a9"/></g><path d="M9 1.500 l9 10 M18 2 l-9 9" stroke="#a9a9a9" stroke-width="1.300"/></svg>
<div class="b" style="left:322.3px;top:92.5px;width:1.4px;height:24px;background:#bcc2d0;"></div><div class="b" style="left:323.7px;top:92.5px;width:1px;height:24px;background:#dfe3ee;"></div>
<svg style="left:330.60px;top:94.00px" width="20" height="20" viewBox="0 0 20 20"><rect x="2" y="2" width="15" height="16" fill="#e6e6e6" stroke="#a9a9a9" stroke-width="1.3"/><path d="M4.500 5 l3 3 M7.500 5 l-3 3 M4.500 11.500 l3 3 M7.500 11.500 l-3 3 M4 10 h11" stroke="#a9a9a9" stroke-width="0.900"/><path d="M18.500 8.500 v3 h-4 v2 l-4 -3.500 l4 -3.500 v2z" fill="#a9a9a9"/></svg>
<svg style="left:358.75px;top:94.00px" width="20" height="20" viewBox="0 0 20 20"><rect x="1.500" y="2.500" width="17" height="14" fill="#e6e6e6" stroke="#a9a9a9" stroke-width="1.3"/><path d="M1.500 5.500 h17" stroke="#a9a9a9" stroke-width="1.400"/><rect x="3.500" y="7.500" width="5" height="2.500" fill="#fff" stroke="#a9a9a9" stroke-width="0.800"/><rect x="11" y="7.500" width="5" height="2.500" fill="#fff" stroke="#a9a9a9" stroke-width="0.800"/><rect x="3.500" y="12" width="4" height="2.500" fill="#fff" stroke="#a9a9a9" stroke-width="0.800"/><path d="M8 15 q2 -3.500 4.500 -1.500 q2.500 -2 4.500 1.500 q-2 2.500 -4.500 1 q-2.500 1.500 -4.500 -1z" fill="#f4f4f4" stroke="#a9a9a9" stroke-width="1"/></svg>
<svg style="left:386.00px;top:94.00px" width="20" height="20" viewBox="0 0 20 20"><rect x="2" y="8" width="16" height="10" fill="#e6e6e6" stroke="#a9a9a9" stroke-width="1.3"/><rect x="5" y="1.500" width="10" height="11" fill="#fff" stroke="#a9a9a9" stroke-width="1.300"/><circle cx="10" cy="6.500" r="2.800" fill="none" stroke="#a9a9a9" stroke-width="1.2"/><path d="M8.500 6.500 h2 l-1 -1.200" fill="none" stroke="#a9a9a9" stroke-width="1.2"/><path d="M5 15 h3 M10 15 h2 M14 14 v3" stroke="#fff" stroke-width="1.200"/><rect x="14.500" y="9" width="3" height="7.500" fill="#fff" stroke="#a9a9a9" stroke-width="0.800"/></svg>
<svg style="left:428.75px;top:94.00px" width="20" height="20" viewBox="0 0 20 20"><path d="M4.500 2.500 h11 v9.500 h-11z" fill="#fff" stroke="#a9a9a9" stroke-width="1.400"/><path d="M1.500 16.500 l2 -4 h13 l2 4z" fill="#e6e6e6" stroke="#a9a9a9" stroke-width="1.3"/><path d="M8.500 5 v4.500 M11 5 v4.500" stroke="#a9a9a9" stroke-width="1.300"/></svg>
<svg style="left:456.00px;top:94.00px" width="20" height="20" viewBox="0 0 20 20"><path d="M4.500 2.500 h11 v9.500 h-11z" fill="#fff" stroke="#a9a9a9" stroke-width="1.400"/><path d="M1.500 16.500 l2 -4 h13 l2 4z" fill="#e6e6e6" stroke="#a9a9a9" stroke-width="1.3"/><path d="M8.500 4.500 l4 2.800 l-4 2.800z" fill="#a9a9a9"/></svg>
<svg style="left:484.40px;top:94.00px" width="20" height="20" viewBox="0 0 20 20"><rect x="4" y="1.500" width="11" height="9" fill="#ffb0e0" stroke="#000" stroke-width="1.400"/><path d="M7 4 h5 M8 3 v5 M11 3 v5" stroke="#d000d0" stroke-width="1.300"/><path d="M1 12.500 l3.500 -2.500 h10.500 l3.500 2.500 v3.500 h-17.500z" fill="#ff80c0" stroke="#000" stroke-width="1.200"/><circle cx="6" cy="15" r="2.500" fill="#40e0ff" stroke="#fff" stroke-width="0.800"/><circle cx="14" cy="15" r="2.500" fill="#40e0ff" stroke="#fff" stroke-width="0.800"/><path d="M1 14 h2" stroke="#000" stroke-width="2.500"/></svg>
<svg style="left:510.00px;top:94.00px" width="20" height="20" viewBox="0 0 20 20"><rect x="4" y="2.500" width="11" height="10" fill="#e6e6e6" stroke="#a9a9a9" stroke-width="1.3"/><rect x="1.500" y="5" width="11" height="11" fill="#f4f4f4" stroke="#a9a9a9" stroke-width="1.300"/><path d="M9 9.500 h5 v-2 l4.500 3.500 l-4.500 3.500 v-2 h-5z" fill="#a9a9a9"/></svg>
<svg style="left:538.75px;top:94.00px" width="20" height="20" viewBox="0 0 20 20"><path d="M2 4.500 l2 -2.500 h14 v13 l-2 2.500 h-14z" fill="#e6e6e6" stroke="#a9a9a9" stroke-width="1.3"/><path d="M2 4.500 h14 v13 M16 4.500 l2 -2.500 M9 4.500 v13" fill="none" stroke="#a9a9a9" stroke-width="1.2"/><rect x="4" y="9" width="3" height="5" fill="#fff" stroke="#a9a9a9" stroke-width="0.800"/><path d="M11.500 8 h3 M11.500 10.500 h3 M11.500 13 h3" stroke="#a9a9a9" stroke-width="0.800"/></svg>
<svg style="left:565.60px;top:94.00px" width="20" height="20" viewBox="0 0 20 20"><rect x="1.500" y="2" width="17" height="15.500" fill="#f4f4f4" stroke="#a9a9a9" stroke-width="1.400"/><rect x="4.500" y="7" width="11" height="6" fill="#e6e6e6" stroke="#a9a9a9" stroke-width="1.3"/><path d="M7 5 v2 M13 5 v2 M7 13 v2 M13 13 v2" stroke="#a9a9a9" stroke-width="2.200"/></svg>
<svg style="left:593.75px;top:94.00px" width="20" height="20" viewBox="0 0 20 20"><path d="M5 4 l2 -2 h8 v12 l-2 2.500 h-8z" fill="#e6e6e6" stroke="#a9a9a9" stroke-width="1.3"/><path d="M5 4 h8 v12.500 M13 4 l2 -2" fill="none" stroke="#a9a9a9" stroke-width="1.2"/><rect x="7" y="9.500" width="4" height="5" fill="#fff" stroke="#a9a9a9" stroke-width="0.900"/><path d="M1 16 l3 2 M19 15 l-4 3.500" stroke="#a9a9a9" stroke-width="0.800"/></svg>
<svg style="left:621.90px;top:94.00px" width="20" height="20" viewBox="0 0 20 20"><rect x="2" y="1.500" width="17" height="16.500" fill="#fff" stroke="#a9a9a9" stroke-width="1" stroke-dasharray="1 1"/><path d="M5.500 2 v15 M9 2 v15 M12.500 2 v15 M16 2 v15" stroke="#a9a9a9" stroke-width="1.400"/><rect x="4" y="12" width="3" height="3" fill="#a9a9a9"/><rect x="7.500" y="8" width="3" height="3" fill="#a9a9a9"/><rect x="11" y="11" width="3" height="3" fill="#a9a9a9"/><rect x="14.500" y="9" width="3" height="3" fill="#a9a9a9"/></svg>
<svg style="left:649.40px;top:94.00px" width="20" height="20" viewBox="0 0 20 20"><rect x="1.500" y="2" width="17" height="16" fill="#e6e6e6" stroke="#a9a9a9" stroke-width="1.3"/><rect x="5.500" y="4" width="3" height="12" fill="#fff" stroke="#a9a9a9" stroke-width="0.800"/><rect x="12" y="4" width="3" height="12" fill="#fff" stroke="#a9a9a9" stroke-width="0.800"/><rect x="4.500" y="11" width="5" height="4" fill="#a9a9a9"/><rect x="11" y="8" width="5" height="5" fill="#a9a9a9"/></svg>
<svg style="left:676.90px;top:94.00px" width="20" height="20" viewBox="0 0 20 20"><rect x="1" y="1.500" width="9" height="8.500" fill="#a8a8a8"/><rect x="10" y="1.500" width="9" height="8.500" fill="#ededed"/><rect x="1" y="10" width="18" height="8.500" fill="#c6c6c6"/></svg>
<svg style="left:703.75px;top:94.00px" width="20" height="20" viewBox="0 0 20 20"><rect x="1.500" y="4" width="15" height="14" rx="1" fill="#e6e6e6" stroke="#a9a9a9" stroke-width="1.3"/><path d="M4 9 l3 3.500 l5 -6" fill="none" stroke="#d0d0d0" stroke-width="2.200"/><path d="M3 14 h11 M3 16 h11" stroke="#a9a9a9" stroke-width="0.800"/><path d="M10.500 11 l1 -3 l5.500 -6 l2 2 l-5.500 6z" fill="#fff" stroke="#a9a9a9" stroke-width="1.200"/></svg>
<svg style="left:730.60px;top:94.00px" width="20" height="20" viewBox="0 0 20 20"><rect x="4.500" y="2" width="11" height="8" fill="#fff" stroke="#a9a9a9" stroke-width="1.300"/><path d="M6.500 7 l1.500 -2.500 l1.500 2.500 l1.500 -2.500 l1.500 2.500" fill="none" stroke="#a9a9a9" stroke-width="1.2"/><rect x="1.500" y="12" width="17" height="5" rx="1" fill="#e6e6e6" stroke="#a9a9a9" stroke-width="1.3"/><path d="M4 14.500 h12" stroke="#fff" stroke-width="1.200"/></svg>
<svg style="left:771.90px;top:94.00px" width="20" height="20" viewBox="0 0 20 20"><path d="M2.5 5 h-3 v10 h3 M6.5 5 h3 v10 h-3" fill="none" stroke="#868686" stroke-width="1.400"/><path d="M9 2.500 h8 v15 h-8 M17 9 l1.500 1.500 l-1.500 1.500" fill="none" stroke="#a9a9a9" stroke-width="1.2"/></svg>
<svg style="left:800.00px;top:94.00px" width="20" height="20" viewBox="0 0 20 20"><path d="M3.5 5 h-3 v10 h3 M7.5 5 h3 v10 h-3" fill="none" stroke="#868686" stroke-width="1.400"/><path d="M2 2 h15 v8 M15 8.500 l2 2 l2 -2" fill="none" stroke="#a9a9a9" stroke-width="1.2"/></svg>
<svg style="left:825.00px;top:94.00px" width="20" height="20" viewBox="0 0 20 20"><path d="M8.0 5 h-3 v10 h3 M12.0 5 h3 v10 h-3" fill="none" stroke="#868686" stroke-width="1.400"/><path d="M6 5.500 v-3 h5 v3 M9.500 4 l1.500 1.500 l1.500 -1.500" fill="none" stroke="#a9a9a9" stroke-width="1.2"/></svg>
<svg style="left:854.40px;top:94.00px" width="20" height="20" viewBox="0 0 20 20"><path d="M7.5 5 h-3 v10 h3 M11.5 5 h3 v10 h-3" fill="none" stroke="#868686" stroke-width="1.400"/><path d="M11 5 v-2.500 h8 v9 M17.500 10 l1.500 1.500 l1.500 -1.500" fill="none" stroke="#a9a9a9" stroke-width="1.2"/></svg>
<svg style="left:883.75px;top:94.00px" width="20" height="20" viewBox="0 0 20 20"><path d="M10.0 5 h-3 v10 h3 M14.0 5 h3 v10 h-3" fill="none" stroke="#868686" stroke-width="1.400"/><path d="M1.500 10 h4 M4 8.500 l1.500 1.500 l-1.500 1.500" fill="none" stroke="#a9a9a9" stroke-width="1.2"/></svg>
<div class="b" style="left:912.3px;top:92.5px;width:1.4px;height:24px;background:#bcc2d0;"></div><div class="b" style="left:913.7px;top:92.5px;width:1px;height:24px;background:#dfe3ee;"></div>
<svg style="left:920.60px;top:94.00px" width="20" height="20" viewBox="0 0 20 20"><path d="M9.0 5 h-3 v10 h3 M13.0 5 h3 v10 h-3" fill="none" stroke="#868686" stroke-width="1.400"/><path d="M1 5 h3 v3.500 h-3z M1 9 h3 v3.500 h-3z" fill="#f0f0f0" stroke="#a9a9a9" stroke-width="0.800"/><path d="M1 14.500 h3 M3 13.500 l1 1 l-1 1" fill="none" stroke="#a9a9a9" stroke-width="1.2"/></svg>
<svg style="left:950.00px;top:94.00px" width="20" height="20" viewBox="0 0 20 20"><rect x="6" y="2" width="10" height="15.500" rx="1" fill="#fff" stroke="#a9a9a9" stroke-width="1.600"/><path d="M8 5 h6 M8 7.500 h6 M8 10 h6 M8 12.500 h6 M8 15 h6" stroke="#a9a9a9" stroke-width="0.900"/><rect x="1.500" y="7" width="3.500" height="6" fill="#f0f0f0" stroke="#a9a9a9" stroke-width="0.800"/></svg>
<svg style="left:976.00px;top:94.00px" width="20" height="20" viewBox="0 0 20 20"><rect x="2" y="2" width="10" height="8" rx="1.500" fill="#fff" stroke="#a9a9a9" stroke-width="1.400"/><path d="M4 5 h6 M4 7 h6" stroke="#a9a9a9" stroke-width="0.900"/><path d="M6 10 v3.500 h3" fill="none" stroke="#a9a9a9" stroke-width="1.2"/><path d="M14 6 h3.500 v9.500 h-3.500 M9.500 15.500 h-2" fill="none" stroke="#868686" stroke-width="1.300"/></svg>
<div class="b" style="left:1015px;top:90.5px;width:27.5px;height:27.5px;background:#fdf0bf;border:1.5px solid #e5c365;box-sizing:border-box;"></div>
<svg style="left:1020.00px;top:93.30px" width="20" height="16" viewBox="0 0 20 16"><path d="M4 1.500 v7 l2 -2 l5.500 6.500 l2.500 -2 l-5.500 -6.500 l2.500 -2z" fill="#fff" stroke="#000" stroke-width="1.300"/><path d="M7 6.500 l5.500 6.500" stroke="#000" stroke-width="0.800"/></svg>
<span class="t" style="left:1019.25px;top:106.19px;font-size:12.3px;color:#1a1a1a;letter-spacing:-0.335px;transform:scaleY(1.17);transform-origin:50% 84.65%;">Esc</span>
<span class="t" style="left:1048.85px;top:106.19px;font-size:12.3px;color:#9a9aa2;letter-spacing:-0.427px;transform:scaleY(1.17);transform-origin:50% 84.65%;">F3</span>
<span class="t" style="left:1077.00px;top:106.19px;font-size:12.3px;color:#9a9aa2;letter-spacing:-0.427px;transform:scaleY(1.17);transform-origin:50% 84.65%;">F4</span>
<span class="t" style="left:1103.85px;top:106.19px;font-size:12.3px;color:#9a9aa2;letter-spacing:-0.427px;transform:scaleY(1.17);transform-origin:50% 84.65%;">F5</span>
<span class="t" style="left:1131.25px;top:106.19px;font-size:12.3px;color:#9a9aa2;letter-spacing:-0.427px;transform:scaleY(1.17);transform-origin:50% 84.65%;">F6</span>
<span class="t" style="left:1158.85px;top:106.19px;font-size:12.3px;color:#9a9aa2;letter-spacing:-0.427px;transform:scaleY(1.17);transform-origin:50% 84.65%;">F7</span>
<span class="t" style="left:1186.25px;top:106.19px;font-size:12.3px;color:#9a9aa2;letter-spacing:-0.427px;transform:scaleY(1.17);transform-origin:50% 84.65%;">F8</span>
<span class="t" style="left:1213.85px;top:106.19px;font-size:12.3px;color:#9a9aa2;letter-spacing:-0.427px;transform:scaleY(1.17);transform-origin:50% 84.65%;">F9</span>
<svg style="left:1045.60px;top:92.00px" width="20" height="14" viewBox="0 0 20 14"><rect x="4.500" y="2.500" width="11" height="4.500" fill="#f4f4f4" stroke="#868686" stroke-width="1.200"/><path d="M10 7 v4.500 M6.500 9.500 h7 M8 11.500 h4" stroke="#868686" stroke-width="1.100"/></svg>
<svg style="left:1073.75px;top:92.00px" width="20" height="14" viewBox="0 0 20 14"><rect x="2.500" y="2.500" width="16" height="8" fill="#f4f4f4" stroke="#868686" stroke-width="1.200"/><path d="M10.500 2.500 v8 M0.500 6.500 l2 -1.500 v3z" stroke="#868686" stroke-width="1" fill="#868686"/><text x="6.500" y="9.500" font-size="7.500" font-family="Liberation Sans,sans-serif" fill="#868686" text-anchor="middle" font-weight="bold">N</text></svg>
<svg style="left:1100.60px;top:92.00px" width="20" height="14" viewBox="0 0 20 14"><rect x="4.500" y="2.500" width="11" height="4.500" fill="#f4f4f4" stroke="#868686" stroke-width="1.200"/><path d="M8 2.500 v4.500 M12 2.500 v4.500 M10 7 v4.500 M6.500 9.500 h7 M8 11.500 h4" stroke="#868686" stroke-width="1.100"/></svg>
<svg style="left:1128.00px;top:92.00px" width="20" height="14" viewBox="0 0 20 14"><path d="M4.500 12 v-5.500 h9" fill="none" stroke="#868686" stroke-width="1.300"/><path d="M17 3 v7 l-5 -3.500z" fill="#868686"/></svg>
<svg style="left:1155.60px;top:92.00px" width="20" height="14" viewBox="0 0 20 14"><path d="M4 3 v5.500 h8" fill="none" stroke="#868686" stroke-width="1.300"/><path d="M12 5 l5 3.500 l-5 3.500z" fill="#868686"/></svg>
<svg style="left:1183.00px;top:92.00px" width="20" height="14" viewBox="0 0 20 14"><rect x="0.500" y="5" width="7" height="3.500" fill="#f4f4f4" stroke="#cfcfcf" stroke-width="1.100"/><path d="M4 5 v-2.500 h11 v2.500 M4 8.500 v2.500 h11 v-2.500" fill="none" stroke="#cfcfcf" stroke-width="1.100"/><rect x="11" y="5" width="7.500" height="3.500" fill="#f4f4f4" stroke="#868686" stroke-width="1.200"/><path d="M15 2.500 v2.500 M15 8.500 v3" stroke="#868686" stroke-width="1.200"/></svg>
<svg style="left:1210.60px;top:92.00px" width="20" height="14" viewBox="0 0 20 14"><rect x="11.500" y="5" width="7" height="3.500" fill="#f4f4f4" stroke="#cfcfcf" stroke-width="1.100"/><path d="M5 5 v-2.500 h11 v2.500 M5 8.500 v2.500 h11 v-2.500" fill="none" stroke="#cfcfcf" stroke-width="1.100"/><rect x="1" y="5" width="7.500" height="3.500" fill="#f4f4f4" stroke="#868686" stroke-width="1.200"/><path d="M5 2.500 v2.500 M5 8.500 v3" stroke="#868686" stroke-width="1.200"/></svg>
<div class="b" style="left:12.5px;top:122px;width:27.5px;height:27.5px;background:#fdf0bf;border:1.5px solid #e5c365;box-sizing:border-box;"></div>
<span class="t" style="left:16.25px;top:137.09px;font-size:12.3px;color:#161616;letter-spacing:-0.335px;transform:scaleY(1.17);transform-origin:50% 84.65%;">Esc</span>
<svg style="left:41.50px;top:124.80px" width="24" height="14" viewBox="0 0 24 14"><path d="M2 7 h4.500 M6.500 2.500 v9 M17.500 2.500 v9 M17.500 7 h4.500" stroke="#111" stroke-width="1.3" fill="none"/></svg>
<span class="t" style="left:46.32px;top:137.09px;font-size:12.3px;color:#161616;transform:scaleY(1.17);transform-origin:50% 84.65%;">F3</span>
<svg style="left:69.00px;top:124.80px" width="24" height="14" viewBox="0 0 24 14"><path d="M2 7 h4.500 M6.500 2.500 v9 M17.500 2.500 v9 M17.500 7 h4.500" stroke="#111" stroke-width="1.3" fill="none"/><path d="M8.500 11.500 l7 -9" stroke="#111" stroke-width="1.3" fill="none"/></svg>
<span class="t" style="left:73.82px;top:137.09px;font-size:12.3px;color:#161616;transform:scaleY(1.17);transform-origin:50% 84.65%;">F4</span>
<svg style="left:96.50px;top:124.80px" width="24" height="14" viewBox="0 0 24 14"><path d="M2 7 h4.500 M6.500 2.500 v9 M17.500 2.500 v9 M17.500 7 h4.500" stroke="#111" stroke-width="1.3" fill="none"/><text x="12" y="10.600" font-size="10" font-family="Liberation Sans,sans-serif" text-anchor="middle" fill="#111" stroke="#111" stroke-width="0.300">P</text></svg>
<span class="t" style="left:98.25px;top:137.09px;font-size:12.3px;color:#161616;transform:scaleY(1.17);transform-origin:50% 84.65%;">sF1</span>
<svg style="left:124.00px;top:124.80px" width="24" height="14" viewBox="0 0 24 14"><path d="M2 7 h4.500 M6.500 2.500 v9 M17.500 2.500 v9 M17.500 7 h4.500" stroke="#111" stroke-width="1.3" fill="none"/><text x="12" y="10.600" font-size="10" font-family="Liberation Sans,sans-serif" text-anchor="middle" fill="#111" stroke="#111" stroke-width="0.300">N</text></svg>
<span class="t" style="left:125.75px;top:137.09px;font-size:12.3px;color:#161616;transform:scaleY(1.17);transform-origin:50% 84.65%;">sF2</span>
<svg style="left:151.50px;top:124.80px" width="24" height="14" viewBox="0 0 24 14"><path d="M3 10.800 h5 v-8 h7 v8 h5" stroke="#a9a9a9" stroke-width="1.3" fill="none"/><path d="M5.500 7.500 l2.500 -3 l2.500 3" stroke="#a9a9a9" stroke-width="1.3" fill="none"/></svg>
<span class="t" style="left:155.64px;top:137.09px;font-size:12.3px;color:#a0a0a8;transform:scaleY(1.17);transform-origin:50% 84.65%;">aR</span>
<svg style="left:179.00px;top:124.80px" width="24" height="14" viewBox="0 0 24 14"><path d="M3 10.800 h5 v-8 h7 v8 h5" stroke="#a9a9a9" stroke-width="1.3" fill="none"/><path d="M12.500 7 l2.500 3 l2.500 -3" stroke="#a9a9a9" stroke-width="1.3" fill="none"/></svg>
<span class="t" style="left:183.82px;top:137.09px;font-size:12.3px;color:#a0a0a8;transform:scaleY(1.17);transform-origin:50% 84.65%;">aF</span>
<svg style="left:206.50px;top:124.80px" width="24" height="14" viewBox="0 0 24 14"><path d="M3.500 7 h17" stroke="#111" stroke-width="1.3" fill="none" stroke-width="1.600"/></svg>
<span class="t" style="left:211.32px;top:137.09px;font-size:12.3px;color:#161616;transform:scaleY(1.17);transform-origin:50% 84.65%;">F5</span>
<svg style="left:234.00px;top:124.80px" width="24" height="14" viewBox="0 0 24 14"><path d="M12 2 v10" stroke="#111" stroke-width="1.3" fill="none" stroke-width="1.600"/></svg>
<span class="t" style="left:238.82px;top:137.09px;font-size:12.3px;color:#161616;transform:scaleY(1.17);transform-origin:50% 84.65%;">F6</span>
<svg style="left:261.50px;top:124.80px" width="24" height="14" viewBox="0 0 24 14"><path d="M3 7 h16.500 M13.500 3 l4 4 l-4 4 M16.500 3.500 l3.500 3.500 l-3.500 3.500" stroke="#111" stroke-width="1.3" fill="none"/></svg>
<span class="t" style="left:263.25px;top:137.09px;font-size:12.3px;color:#161616;transform:scaleY(1.17);transform-origin:50% 84.65%;">sF8</span>
<svg style="left:289.00px;top:124.80px" width="24" height="14" viewBox="0 0 24 14"><path d="M4.500 7 h15 M12 2 v10 M8 3 l8 8 M16 3 l-8 8" stroke="#111" stroke-width="1.3" fill="none"/></svg>
<span class="t" style="left:290.75px;top:137.09px;font-size:12.3px;color:#161616;transform:scaleY(1.17);transform-origin:50% 84.65%;">sF9</span>
<svg style="left:316.50px;top:124.80px" width="24" height="14" viewBox="0 0 24 14"><path d="M2 7 h3.500 M18.500 7 h3.500 M8 1.500 q-3.500 5.500 0 11 M16 1.500 q3.500 5.500 0 11" stroke="#111" stroke-width="1.3" fill="none"/></svg>
<span class="t" style="left:321.32px;top:137.09px;font-size:12.3px;color:#161616;transform:scaleY(1.17);transform-origin:50% 84.65%;">F9</span>
<svg style="left:344.00px;top:124.80px" width="24" height="14" viewBox="0 0 24 14"><path d="M2 7 h3.500 M18.500 7 h3.500 M8 1.500 q-3.500 5.500 0 11 M16 1.500 q3.500 5.500 0 11" stroke="#111" stroke-width="1.3" fill="none"/><path d="M9.500 11.500 l5 -9" stroke="#111" stroke-width="1.3" fill="none"/></svg>
<span class="t" style="left:345.86px;top:137.09px;font-size:12.3px;color:#161616;transform:scaleY(1.17);transform-origin:50% 84.65%;">F11</span>
<svg style="left:371.50px;top:124.80px" width="24" height="14" viewBox="0 0 24 14"><path d="M2 7 h3.500 M18.500 7 h3.500 M8 1.500 q-3.500 5.500 0 11 M16 1.500 q3.500 5.500 0 11" stroke="#111" stroke-width="1.3" fill="none"/><text x="12" y="10.600" font-size="9.5" font-family="Liberation Sans,sans-serif" text-anchor="middle" fill="#111" stroke="#111" stroke-width="0.300">S</text></svg>
<span class="t" style="left:373.25px;top:137.09px;font-size:12.3px;color:#161616;transform:scaleY(1.17);transform-origin:50% 84.65%;">sF3</span>
<svg style="left:399.00px;top:124.80px" width="24" height="14" viewBox="0 0 24 14"><path d="M2 7 h3.500 M18.500 7 h3.500 M8 1.500 q-3.500 5.500 0 11 M16 1.500 q3.500 5.500 0 11" stroke="#111" stroke-width="1.3" fill="none"/><text x="12" y="10.600" font-size="9.5" font-family="Liberation Sans,sans-serif" text-anchor="middle" fill="#111" stroke="#111" stroke-width="0.300">R</text></svg>
<span class="t" style="left:400.75px;top:137.09px;font-size:12.3px;color:#161616;transform:scaleY(1.17);transform-origin:50% 84.65%;">sF4</span>
<svg style="left:426.50px;top:124.80px" width="24" height="14" viewBox="0 0 24 14"><path d="M2 7 h3.500 M18.500 7 h3.500 M8 1.500 q-3.500 5.500 0 11 M16 1.500 q3.500 5.500 0 11" stroke="#111" stroke-width="1.3" fill="none"/><text x="12" y="10.600" font-size="9.5" font-family="Liberation Sans,sans-serif" text-anchor="middle" fill="#111" stroke="#111" stroke-width="0.300">P</text></svg>
<span class="t" style="left:428.25px;top:137.09px;font-size:12.3px;color:#161616;transform:scaleY(1.17);transform-origin:50% 84.65%;">sF5</span>
<svg style="left:454.00px;top:124.80px" width="24" height="14" viewBox="0 0 24 14"><path d="M2 7 h3.500 M18.500 7 h3.500 M8 1.500 q-3.500 5.500 0 11 M16 1.500 q3.500 5.500 0 11" stroke="#111" stroke-width="1.3" fill="none"/><text x="12" y="10.600" font-size="9.5" font-family="Liberation Sans,sans-serif" text-anchor="middle" fill="#111" stroke="#111" stroke-width="0.300">N</text></svg>
<span class="t" style="left:455.75px;top:137.09px;font-size:12.3px;color:#161616;transform:scaleY(1.17);transform-origin:50% 84.65%;">sF6</span>
<svg style="left:481.50px;top:124.80px" width="24" height="14" viewBox="0 0 24 14"><path d="M2 7 h3 M19 7 h3 M8.500 2 q-1.500 0 -1.500 1.500 v2 q0 1.500 -1.500 1.500 q1.500 0 1.500 1.500 v2 q0 1.500 1.500 1.500 M15.500 2 q1.500 0 1.500 1.500 v2 q0 1.500 1.500 1.500 q-1.500 0 -1.500 1.500 v2 q0 1.500 -1.500 1.500" stroke="#111" stroke-width="1.3" fill="none"/><text x="12" y="10.600" font-size="10" font-family="Liberation Sans,sans-serif" text-anchor="middle" fill="#111" stroke="#111" stroke-width="0.300">F</text></svg>
<span class="t" style="left:482.90px;top:137.09px;font-size:12.3px;color:#161616;transform:scaleY(1.17);transform-origin:50% 84.65%;">F10</span>
<svg style="left:509.00px;top:124.80px" width="24" height="14" viewBox="0 0 24 14"><path d="M2 7 h3 M19 7 h3" stroke="#a9a9a9" stroke-width="1.3" fill="none"/><rect x="5" y="3" width="14" height="8" stroke="#a9a9a9" stroke-width="1.3" fill="none"/></svg>
<span class="t" style="left:510.75px;top:137.09px;font-size:12.3px;color:#a0a0a8;transform:scaleY(1.17);transform-origin:50% 84.65%;">sF7</span>
<svg style="left:536.50px;top:124.80px" width="24" height="14" viewBox="0 0 24 14"><path d="M4 1.500 v5 h2.500 M6.500 1.500 v10 M17.500 1.500 v10 M17.500 6.500 h2.500 v-5" stroke="#111" stroke-width="1.3" fill="none"/></svg>
<span class="t" style="left:542.00px;top:137.09px;font-size:12.3px;color:#161616;transform:scaleY(1.17);transform-origin:50% 84.65%;">c3</span>
<svg style="left:564.00px;top:124.80px" width="24" height="14" viewBox="0 0 24 14"><path d="M4 1.500 v5 h2.500 M6.500 1.500 v10 M17.500 1.500 v10 M17.500 6.500 h2.500 v-5" stroke="#111" stroke-width="1.3" fill="none"/><path d="M8.500 11 l7 -9" stroke="#111" stroke-width="1.3" fill="none"/></svg>
<span class="t" style="left:569.50px;top:137.09px;font-size:12.3px;color:#161616;transform:scaleY(1.17);transform-origin:50% 84.65%;">c4</span>
<svg style="left:591.50px;top:124.80px" width="24" height="14" viewBox="0 0 24 14"><path d="M4 1.500 v5 h2.500 M6.500 1.500 v10 M17.500 1.500 v10 M17.500 6.500 h2.500 v-5" stroke="#111" stroke-width="1.3" fill="none"/><text x="12" y="10.600" font-size="10" font-family="Liberation Sans,sans-serif" text-anchor="middle" fill="#111" stroke="#111" stroke-width="0.300">P</text></svg>
<span class="t" style="left:597.00px;top:137.09px;font-size:12.3px;color:#161616;transform:scaleY(1.17);transform-origin:50% 84.65%;">c5</span>
<svg style="left:619.00px;top:124.80px" width="24" height="14" viewBox="0 0 24 14"><path d="M4 1.500 v5 h2.500 M6.500 1.500 v10 M17.500 1.500 v10 M17.500 6.500 h2.500 v-5" stroke="#111" stroke-width="1.3" fill="none"/><text x="12" y="10.600" font-size="10" font-family="Liberation Sans,sans-serif" text-anchor="middle" fill="#111" stroke="#111" stroke-width="0.300">N</text></svg>
<span class="t" style="left:624.50px;top:137.09px;font-size:12.3px;color:#161616;transform:scaleY(1.17);transform-origin:50% 84.65%;">c6</span>
<svg style="left:17.00px;top:124.80px" width="20" height="16" viewBox="0 0 20 16"><path d="M4 1.500 v7 l2 -2 l5.500 6.500 l2.500 -2 l-5.500 -6.500 l2.500 -2z" fill="#fff" stroke="#000" stroke-width="1.300"/><path d="M7 6.500 l5.500 6.500" stroke="#000" stroke-width="0.800"/></svg>
<div class="b" style="left:687.5px;top:122px;width:27.2px;height:27.5px;background:#fdf0bf;border:1.5px solid #e5c365;box-sizing:border-box;"></div>
<div class="b" style="left:714.7px;top:122px;width:27.6px;height:27.5px;background:#fdf0bf;border:1.5px solid #e5c365;box-sizing:border-box;"></div>
<div class="b" style="left:797.5px;top:122px;width:27.5px;height:27.5px;background:#fdf0bf;border:1.5px solid #e5c365;box-sizing:border-box;"></div>
<div class="b" style="left:982.5px;top:122px;width:27.5px;height:27.5px;background:#fdf0bf;border:1.5px solid #e5c365;box-sizing:border-box;"></div>
<svg style="left:663.75px;top:125.00px" width="20" height="20" viewBox="0 0 20 20"><rect x="1.500" y="3.500" width="16.500" height="14" fill="#ffd8f4" stroke="#000" stroke-width="1.500"/><path d="M4 1.500 h5 l1 2 h-7z" fill="#7030a0" stroke="#000" stroke-width="0.800"/><path d="M4.500 7 h10.500 M4.500 9.500 h10.500 M4.500 12 h10.500 M4.500 14.500 h10.500" stroke="#444" stroke-width="1.100"/></svg>
<svg style="left:691.00px;top:125.00px" width="20" height="20" viewBox="0 0 20 20"><rect x="2" y="4" width="16" height="14" fill="#f6f6f6" stroke="#868686" stroke-width="1.300"/><path d="M3.500 1.500 h6 l1.500 2.500 h-9z" fill="#a9a9a9" stroke="#868686" stroke-width="0.800"/><path d="M4 8.500 h3 M8.500 7 v3 M11.500 7 v3 M13 8.500 h3 M4 13.500 h3 M8.500 12 v3 M11.500 12 v3 M13 13.500 h3" stroke="#a9a9a9" stroke-width="1.100"/></svg>
<svg style="left:718.50px;top:125.00px" width="20" height="20" viewBox="0 0 20 20"><rect x="1" y="2" width="18" height="16.500" fill="#6a7a8a"/><rect x="2.500" y="3.500" width="15" height="13.500" fill="#a8d4ff"/><path d="M4 9 h4 l1 -1.500 h5 v8 h-10z" fill="#ffe060" stroke="#000" stroke-width="1.100"/><path d="M4 15.500 h10" stroke="#000" stroke-width="1.500"/><path d="M11 11 l2 -6 l1.500 3 l2.500 -3.500 l-0.500 4 l2 0.500 l-3 1.500 l1 3z" fill="#ff9020"/></svg>
<svg style="left:745.60px;top:125.00px" width="20" height="20" viewBox="0 0 20 20"><rect x="1" y="2" width="18" height="16.500" fill="#6a7a8a"/><rect x="2.500" y="3.500" width="15" height="13.500" fill="#a8d4ff"/><rect x="4" y="8" width="12" height="8.500" fill="#b8e8c0" stroke="#000" stroke-width="1.200"/><path d="M4 8.500 l6 4.500 l6 -4.500 M4 16 l4.500 -4 M16 16 l-4.500 -4" fill="none" stroke="#000" stroke-width="0.900"/><rect x="7" y="4.500" width="6" height="5" fill="#fff" stroke="#555" stroke-width="0.800"/></svg>
<svg style="left:773.00px;top:125.00px" width="20" height="20" viewBox="0 0 20 20"><rect x="1" y="2" width="18" height="16.500" fill="#6a7a8a"/><rect x="2.500" y="3.500" width="15" height="13.500" fill="#a8d4ff"/><path d="M3 10 q1 -5 4 -4 M17 10 q-1 -5 -4 -4 M8.500 11 q1.500 -1.500 3 0" fill="none" stroke="#000" stroke-width="1.100"/><circle cx="6.200" cy="12.500" r="3.300" fill="#ffc8c0" stroke="#000" stroke-width="1.100"/><circle cx="13.800" cy="12.500" r="3.300" fill="#ffc8c0" stroke="#000" stroke-width="1.100"/></svg>
<svg style="left:800.60px;top:125.00px" width="20" height="20" viewBox="0 0 20 20"><rect x="1" y="2" width="18" height="16.500" fill="#6a7a8a"/><rect x="2.500" y="3.500" width="15" height="13.500" fill="#cfe6ff"/><text x="10" y="16" font-size="14.500" font-family="Liberation Sans,sans-serif" font-weight="bold" text-anchor="middle" fill="#8a4a10" stroke="#8a4a10" stroke-width="0.700">F</text></svg>
<div class="b" style="left:829.9px;top:123.5px;width:1.4px;height:24px;background:#bcc2d0;"></div><div class="b" style="left:831.3000000000001px;top:123.5px;width:1px;height:24px;background:#dfe3ee;"></div>
<svg style="left:838.00px;top:125.00px" width="20" height="20" viewBox="0 0 20 20"><rect x="1" y="2" width="18" height="16.500" fill="#6a7a8a"/><rect x="2.500" y="3.500" width="15" height="13.500" fill="#a8d4ff"/><rect x="5" y="5.500" width="10" height="2.200" fill="#ffe060" stroke="#000" stroke-width="0.700"/><path d="M10 7.700 v2.300 M6.500 12 v-2 h7.500 v2" fill="none" stroke="#000" stroke-width="1"/><rect x="4.500" y="12" width="4.500" height="4" fill="#f04080" stroke="#000" stroke-width="0.900"/><rect x="11.500" y="12" width="4.500" height="4" fill="#60c8f0" stroke="#000" stroke-width="0.900"/></svg>
<svg style="left:865.60px;top:125.00px" width="20" height="20" viewBox="0 0 20 20"><rect x="1" y="1.500" width="18" height="17" rx="1.500" fill="#a8e4ff" stroke="#000" stroke-width="1.600"/><path d="M3 4.500 h14" stroke="#20b050" stroke-width="2" stroke-dasharray="1.500 0.800"/><path d="M5.5 7.500 l1.800 2.500 h-1.100 v3 h1.100 l-1.800 2.500 l-1.800 -2.500 h1.100 v-3 h-1.100z" fill="#2020e0"/><path d="M10 7.500 l1.800 2.500 h-1.100 v3 h1.100 l-1.800 2.500 l-1.800 -2.500 h1.100 v-3 h-1.100z" fill="#2020e0"/><path d="M14.5 7.500 l1.800 2.500 h-1.100 v3 h1.100 l-1.800 2.500 l-1.800 -2.500 h1.100 v-3 h-1.100z" fill="#2020e0"/></svg>
<svg style="left:893.00px;top:125.00px" width="20" height="20" viewBox="0 0 20 20"><path d="M1.500 8 v10 h17 v-10" fill="#b0ecd8" stroke="#000" stroke-width="1.400"/><path d="M3 12 h14" stroke="#fff" stroke-width="2.200" stroke-dasharray="1.300 0.800"/><path d="M3 15 h14" stroke="#207050" stroke-width="2" stroke-dasharray="1.300 0.800"/><path d="M4.5 3.500 v3 h-1.600 l2.600 3 l2.600 -3 h-1.600 v-3z" fill="#30b060"/><path d="M12.5 3.500 v3 h-1.600 l2.600 3 l2.600 -3 h-1.600 v-3z" fill="#30b060"/><path d="M3 2 h14" stroke="#30b060" stroke-width="1.200" stroke-dasharray="1 1.500"/></svg>
<div class="b" style="left:922.3px;top:123.5px;width:1.4px;height:24px;background:#bcc2d0;"></div><div class="b" style="left:923.7px;top:123.5px;width:1px;height:24px;background:#dfe3ee;"></div>
<svg style="left:930.60px;top:125.00px" width="20" height="20" viewBox="0 0 20 20"><path d="M1.500 2 h12.500 l4.500 4 v12.500 h-17z" fill="#c8f0c8" stroke="#000" stroke-width="1.500"/><path d="M14 2 v4 h4.500z" fill="#fff" stroke="#000" stroke-width="0.900"/><path d="M4 6 h4 l2.500 5.500 l2.500 -5.500 h3.500 l-5 11 h-2.500z" fill="#ff7010"/></svg>
<svg style="left:958.00px;top:125.00px" width="20" height="20" viewBox="0 0 20 20"><path d="M1.500 2 h12.500 l4.500 4 v12.500 h-17z" fill="#c8f0c8" stroke="#000" stroke-width="1.500"/><path d="M14 2 v4 h4.500z" fill="#fff" stroke="#000" stroke-width="0.900"/><text x="9.5" y="16.5" font-size="15" font-family="Liberation Sans,sans-serif" font-weight="bold" text-anchor="middle" fill="#1080ff" stroke="#1080ff" stroke-width="1.1">D</text></svg>
<svg style="left:986.00px;top:125.00px" width="20" height="20" viewBox="0 0 20 20"><path d="M1.500 2 h12.500 l4.500 4 v12.500 h-17z" fill="#c8f0c8" stroke="#000" stroke-width="1.500"/><path d="M14 2 v4 h4.500z" fill="#fff" stroke="#000" stroke-width="0.900"/><text x="7" y="16.5" font-size="15" font-family="Liberation Sans,sans-serif" font-weight="bold" text-anchor="middle" fill="#1080ff" stroke="#1080ff" stroke-width="0.2">D</text><text x="14" y="17" font-size="13" font-family="Liberation Sans,sans-serif" font-weight="bold" text-anchor="middle" fill="#ff8030" stroke="#ff8030" stroke-width="0.2">v</text></svg>
<svg style="left:1013.00px;top:125.00px" width="20" height="20" viewBox="0 0 20 20"><path d="M1.500 2 h12.500 l4.500 4 v12.500 h-17z" fill="#c8f0c8" stroke="#000" stroke-width="1.500"/><path d="M14 2 v4 h4.500z" fill="#fff" stroke="#000" stroke-width="0.900"/><text x="7" y="16.5" font-size="15" font-family="Liberation Sans,sans-serif" font-weight="bold" text-anchor="middle" fill="#1080ff" stroke="#1080ff" stroke-width="0.2">D</text><text x="14" y="17" font-size="13" font-family="Liberation Sans,sans-serif" font-weight="bold" text-anchor="middle" fill="#ff50d0" stroke="#ff50d0" stroke-width="0.2">c</text></svg>
<svg style="left:1040.60px;top:125.00px" width="20" height="20" viewBox="0 0 20 20"><path d="M1.500 2 h12.500 l4.500 4 v12.500 h-17z" fill="#c8f0c8" stroke="#000" stroke-width="1.500"/><path d="M14 2 v4 h4.500z" fill="#fff" stroke="#000" stroke-width="0.900"/><text x="7" y="15" font-size="14" font-family="Liberation Sans,sans-serif" font-weight="bold" text-anchor="middle" fill="#ff8030" stroke="#ff8030" stroke-width="0.2">V</text><text x="14" y="17" font-size="13" font-family="Liberation Sans,sans-serif" font-weight="bold" text-anchor="middle" fill="#ff50d0" stroke="#ff50d0" stroke-width="0.2">c</text></svg>
<svg style="left:1068.00px;top:125.00px" width="20" height="20" viewBox="0 0 20 20"><path d="M1.500 2 h12.500 l4.500 4 v12.500 h-17z" fill="#c8f0c8" stroke="#000" stroke-width="1.500"/><path d="M14 2 v4 h4.500z" fill="#fff" stroke="#000" stroke-width="0.900"/><text x="10" y="17" font-size="16" font-family="Liberation Sans,sans-serif" font-weight="bold" text-anchor="middle" fill="#000" stroke="#000" stroke-width="0.6">A</text></svg>
<div class="b" style="left:1097.3px;top:123.5px;width:1.4px;height:24px;background:#bcc2d0;"></div><div class="b" style="left:1098.7px;top:123.5px;width:1px;height:24px;background:#dfe3ee;"></div>
<svg style="left:1103.75px;top:125.00px" width="20" height="20" viewBox="0 0 20 20"><circle cx="8.500" cy="8.500" r="6.600" fill="#a8c8ff" stroke="#000" stroke-width="1.300"/><circle cx="8.500" cy="8.500" r="5" fill="#c8dcff"/><path d="M8.500 4.500 v8 M4.500 8.500 h8" stroke="#3010c0" stroke-width="2.400"/><path d="M13.500 13.500 l4.500 4.500" stroke="#000" stroke-width="2.400" stroke-linecap="round"/></svg>
<svg style="left:1132.00px;top:125.00px" width="20" height="20" viewBox="0 0 20 20"><circle cx="8.500" cy="8.500" r="6.600" fill="#b8f090" stroke="#000" stroke-width="1.300"/><circle cx="8.500" cy="8.500" r="5" fill="#d0f8a8"/><path d="M4.500 8.500 h8" stroke="#109020" stroke-width="2.400"/><path d="M13.500 13.500 l4.500 4.500" stroke="#000" stroke-width="2.400" stroke-linecap="round"/></svg>
<div class="b" style="left:1162.3px;top:123.5px;width:1.4px;height:24px;background:#bcc2d0;"></div><div class="b" style="left:1163.7px;top:123.5px;width:1px;height:24px;background:#dfe3ee;"></div>
<svg style="left:1170.00px;top:125.00px" width="20" height="20" viewBox="0 0 20 20"><circle cx="7" cy="6" r="4.600" fill="#d8e4ff" stroke="#000" stroke-width="1.200"/><circle cx="7" cy="6" r="2.600" fill="#4010e0"/><path d="M4.500 10 l-3.500 4.500" stroke="#000" stroke-width="1.800" stroke-linecap="round"/><path d="M7 13.500 h3.500 M15.500 13.500 h3.500" stroke="#ff7020" stroke-width="1.600"/><path d="M11 9.500 v8 M15 9.500 v8" stroke="#ff7020" stroke-width="2"/></svg>
<svg style="left:1197.50px;top:125.00px" width="20" height="20" viewBox="0 0 20 20"><circle cx="7" cy="6" r="4.600" fill="#f0f0f0" stroke="#a9a9a9" stroke-width="1.200"/><path d="M5 6 h4" stroke="#868686" stroke-width="1.500"/><path d="M4.500 10 l-3.500 4.500" stroke="#868686" stroke-width="1.800" stroke-linecap="round"/><path d="M11 9.500 v8 M15 9.500 v8 M7 13.500 h3.500 M15.500 13.500 h3.500" stroke="#dcdcdc" stroke-width="1.800"/></svg>
<div class="b" style="left:1227.3px;top:123.5px;width:1.4px;height:24px;background:#bcc2d0;"></div><div class="b" style="left:1228.7px;top:123.5px;width:1px;height:24px;background:#dfe3ee;"></div>
<svg style="left:1236.00px;top:125.00px" width="20" height="20" viewBox="0 0 20 20"><rect x="1" y="1.500" width="18.500" height="17" fill="#808890" stroke="#000" stroke-width="1.200"/><rect x="3.500" y="3.500" width="13.500" height="12" fill="#30e0e0" stroke="#000" stroke-width="1.200"/><path d="M5 6.500 h7 M5 9.500 h10 M5 12.500 h6" stroke="#000" stroke-width="1.400"/></svg>
<svg style="left:1278.00px;top:125.00px" width="20" height="20" viewBox="0 0 20 20"><rect x="6" y="7" width="12.500" height="11" fill="#b0f0e0" stroke="#000" stroke-width="1.400"/><path d="M2.500 1.500 h12 q1.500 0 1.500 1.500 v6 q0 1.500 -1.500 1.500 h-8.500 l-1 2.500 l-1 -2.500 h-1.500 q-1.500 0 -1.500 -1.500 v-6 q0 -1.500 1.500 -1.500z" fill="#fff" stroke="#e02050" stroke-width="1.400"/><path d="M4 4.500 h9 M4 6.500 h9 M4 8.500 h9" stroke="#999" stroke-width="0.900"/></svg>
<div class="b" style="left:1307.3px;top:123.5px;width:1.4px;height:24px;background:#bcc2d0;"></div><div class="b" style="left:1308.7px;top:123.5px;width:1px;height:24px;background:#dfe3ee;"></div>
<svg style="left:1315.00px;top:125.00px" width="20" height="20" viewBox="0 0 20 20"><defs><radialGradient id="bc" cx="0.4" cy="0.35" r="0.7"><stop offset="0" stop-color="#fff"/><stop offset="0.6" stop-color="#b8d0ff"/><stop offset="1" stop-color="#3060e0"/></radialGradient></defs><circle cx="10" cy="10" r="7.500" fill="url(#bc)" stroke="#102060" stroke-width="1.200"/><path d="M6 10 l3 3.500 l5.500 -7" fill="none" stroke="#e01030" stroke-width="2.400"/></svg>
<svg style="left:1342.50px;top:125.00px" width="20" height="20" viewBox="0 0 20 20"><defs><radialGradient id="rc" cx="0.4" cy="0.35" r="0.7"><stop offset="0" stop-color="#ffd0d8"/><stop offset="0.6" stop-color="#f06080"/><stop offset="1" stop-color="#c02040"/></radialGradient></defs><circle cx="10" cy="10" r="7.500" fill="url(#rc)" stroke="#601020" stroke-width="1"/><path d="M6.500 6.500 l7 7 M13.500 6.500 l-7 7" stroke="#2050f0" stroke-width="2.200"/></svg>
<svg style="left:1370.60px;top:125.00px" width="20" height="20" viewBox="0 0 20 20"><path d="M1.500 8.500 v9 h17 v-9" fill="#b060d0" stroke="#000" stroke-width="1.500"/><path d="M3.500 7.500 q3.500 -1.500 6.500 1 q3 -2.500 6.500 -1 v8 q-3.500 -1.500 -6.500 1 q-3 -2.500 -6.500 -1z" fill="#d0e8ff" stroke="#000" stroke-width="1.200"/><path d="M10 8.500 v8" stroke="#000" stroke-width="1.100"/><path d="M2 1.500 l3 3 M5 2 v3 h-3 M18 1.500 l-3 3 M15 2 v3 h3" fill="none" stroke="#e01040" stroke-width="1.200"/></svg>
<svg style="left:1398.00px;top:125.00px" width="20" height="20" viewBox="0 0 20 20"><path d="M1.500 8.500 v9 h17 v-9" fill="#e0e0e0" stroke="#868686" stroke-width="1.500"/><path d="M3.500 7.500 q3.500 -1.500 6.500 1 q3 -2.500 6.500 -1 v8 q-3.500 -1.500 -6.500 1 q-3 -2.500 -6.500 -1z" fill="#f4f4f4" stroke="#868686" stroke-width="1.200"/><path d="M10 8.500 v8" stroke="#868686" stroke-width="1.100"/><path d="M7.500 1 l5 4.500 M12.500 1 l-5 4.500" stroke="#a9a9a9" stroke-width="1.100"/></svg>
<svg style="left:1425.50px;top:125.00px" width="20" height="20" viewBox="0 0 20 20"><path d="M1.500 8.500 v9 h17 v-9" fill="#e0e0e0" stroke="#868686" stroke-width="1.500"/><path d="M3.500 7.500 q3.500 -1.500 6.500 1 q3 -2.500 6.500 -1 v8 q-3.500 -1.500 -6.500 1 q-3 -2.500 -6.500 -1z" fill="#f4f4f4" stroke="#868686" stroke-width="1.200"/><path d="M10 8.500 v8" stroke="#868686" stroke-width="1.100"/><path d="M13 5 q-3 -4 -6 -1" fill="none" stroke="#a9a9a9" stroke-width="1.100"/><path d="M5.500 1.500 v3.500 h3.500z" fill="#a9a9a9"/></svg>
<svg style="left:1453.00px;top:125.00px" width="20" height="20" viewBox="0 0 20 20"><path d="M1.500 8.500 v9 h17 v-9" fill="#e0e0e0" stroke="#868686" stroke-width="1.500"/><path d="M3.500 7.500 q3.500 -1.500 6.500 1 q3 -2.500 6.500 -1 v8 q-3.500 -1.500 -6.500 1 q-3 -2.500 -6.500 -1z" fill="#f4f4f4" stroke="#868686" stroke-width="1.200"/><path d="M10 8.500 v8" stroke="#868686" stroke-width="1.100"/><path d="M7 5 q3 -4 6 -1" fill="none" stroke="#a9a9a9" stroke-width="1.100"/><path d="M14.500 1.500 v3.500 h-3.500z" fill="#a9a9a9"/></svg>
<div class="b" style="left:0px;top:151px;width:1920px;height:846px;background:#293955;"></div>
<!-- project pane -->
<div class="b" style="left:0px;top:151px;width:294px;height:27px;background:#4d6082;"></div>
<span class="t" style="left:5.00px;top:158.20px;font-size:14.3px;color:#ffffff;letter-spacing:-0.215px;">Project</span>
<svg style="left:224px;top:155px" width="70" height="20" viewBox="0 0 70 20">
<path d="M4 8 h11 l-5.5 5.5z" fill="#fff"/>
<path d="M30 5.5 h5 M31 5.5 v6 M34.3 5.5 v6 M28.5 11.5 h8 M32.5 11.5 v4.5" stroke="#fff" stroke-width="1.4" fill="none"/>
<path d="M52 6 l8.5 8.5 M60.5 6 l-8.5 8.5" stroke="#fff" stroke-width="1.7" fill="none"/>
</svg>
<div class="b" style="left:0px;top:178px;width:294px;height:219px;background:#ffffff;"></div>
<div class="b" style="left:0px;top:178px;width:294px;height:1.2px;background:#dfe3ec;"></div>
<div class="b" style="left:22.5px;top:181.5px;width:250px;height:19px;background:#d5d9e9;"></div>
<!-- project tree -->
<svg style="left:0;top:0" width="294" height="400" viewBox="0 0 294 400"><path d="M32.500 202 v89 M32.500 276 h12 M53.500 223 v4 M53.500 308 v90 M53.500 319 h11 M74.500 244 v11 h10 M74.500 351 v46 M74.500 361.500 h11 M74.500 382.500 h11 M38 212.500 h5 M59 233.500 h5 M38 297.500 h5 M59 340 h5" fill="none" stroke="#a0a0a0" stroke-width="1.200"/><path d="M14.5 187.2 v6.500 h-6.500z" fill="#777"/><path d="M36.0 208.5 v6.500 h-6.500z" fill="#777"/><path d="M57.0 229.8 v6.500 h-6.500z" fill="#777"/><path d="M36.0 293.7 v6.500 h-6.500z" fill="#777"/><path d="M57.0 336.3 v6.500 h-6.500z" fill="#777"/></svg>
<svg style="left:24.00px;top:180.70px" width="20" height="20" viewBox="0 0 20 20"><path d="M2.500 3 h15" stroke="#90c8ff" stroke-width="2.200"/><path d="M2.500 1.500 h15 M2.500 4.500 h15 M10 4.500 v8 M4.500 4.500 v3 M15.500 4.500 v3" stroke="#000" stroke-width="1.100" fill="none"/><rect x="1" y="7.500" width="7" height="4" rx="1.500" fill="#208050" stroke="#000" stroke-width="0.900"/><rect x="12" y="7.500" width="7" height="4" rx="1.500" fill="#c8d840" stroke="#000" stroke-width="0.900"/><rect x="3" y="8.700" width="2.500" height="1.800" fill="#b0f0b0"/><rect x="14" y="8.700" width="2.500" height="1.800" fill="#f8ffb0"/><rect x="4" y="13.500" width="12" height="4.500" rx="1.500" fill="#208080" stroke="#000" stroke-width="1"/><rect x="5.500" y="14.700" width="5.500" height="2.200" fill="#60f0f0"/><rect x="12.500" y="14.700" width="2" height="2.200" fill="#a0f0f0"/></svg>
<svg style="left:45.50px;top:202.00px" width="20" height="20" viewBox="0 0 20 20"><path d="M2.500 3 h15" stroke="#90c8ff" stroke-width="2.200"/><path d="M2.500 1.500 h15 M2.500 4.500 h15 M10 4.500 v8 M4.500 4.500 v3 M15.500 4.500 v3" stroke="#000" stroke-width="1.100" fill="none"/><rect x="1" y="7.500" width="7" height="4" rx="1.500" fill="#208050" stroke="#000" stroke-width="0.900"/><rect x="12" y="7.500" width="7" height="4" rx="1.500" fill="#c8d840" stroke="#000" stroke-width="0.900"/><rect x="3" y="8.700" width="2.500" height="1.800" fill="#b0f0b0"/><rect x="14" y="8.700" width="2.500" height="1.800" fill="#f8ffb0"/><rect x="4" y="13.500" width="12" height="4.500" rx="1.500" fill="#208080" stroke="#000" stroke-width="1"/><rect x="5.500" y="14.700" width="5.500" height="2.200" fill="#60f0f0"/><rect x="12.500" y="14.700" width="2" height="2.200" fill="#a0f0f0"/></svg>
<svg style="left:67.00px;top:223.30px" width="20" height="20" viewBox="0 0 20 20"><path d="M1.500 6 l3.500 -4 h13 v11 l-3.500 4.500 h-13z" fill="#dceaff" stroke="#000" stroke-width="1.300"/><path d="M1.500 6 h13 v11.500 M14.500 6 l3.500 -4" fill="none" stroke="#000" stroke-width="1.100"/><rect x="3" y="8" width="3" height="8" fill="#5898e8"/><path d="M8 9 v7 M10.500 10 v6 M12.500 9 v7" stroke="#6080c0" stroke-width="1"/></svg>
<svg style="left:45.50px;top:287.20px" width="20" height="20" viewBox="0 0 20 20"><path d="M1.500 6 l3.500 -4 h13 v11 l-3.500 4.500 h-13z" fill="#dceaff" stroke="#000" stroke-width="1.300"/><path d="M1.500 6 h13 v11.500 M14.500 6 l3.500 -4" fill="none" stroke="#000" stroke-width="1.100"/><rect x="3" y="8" width="3" height="8" fill="#5898e8"/><path d="M8 9 v7 M10.500 10 v6 M12.500 9 v7" stroke="#6080c0" stroke-width="1"/></svg>
<svg style="left:88.50px;top:244.60px" width="20" height="20" viewBox="0 0 20 20"><rect x="5.500" y="6" width="12" height="10" fill="none" stroke="#2a6fe8" stroke-width="1.200"/><rect x="4" y="1" width="8" height="7" fill="#bfe4ff" stroke="#000" stroke-width="1.100"/><path d="M1.500 11 l2 -3 h9 l2 3z" fill="#2a8aa0" stroke="#000" stroke-width="0.900"/><rect x="7.500" y="13.500" width="11.500" height="5" rx="1.800" fill="#f0f0b0" stroke="#000" stroke-width="1.100"/><path d="M10 16 h7" stroke="#777" stroke-width="1.300" stroke-dasharray="1.200 0.800"/></svg>
<svg style="left:45.50px;top:265.90px" width="20" height="20" viewBox="0 0 20 20"><circle cx="11.500" cy="12" r="7" fill="#2080c0" stroke="#000" stroke-width="1.100"/><path d="M7 9 q3 -3 6 0 t4 3 q-3 4 -6 1 t-5 2z" fill="#60d060"/><path d="M9 14 l3 -4 l3 5 M6 12 l4 5" stroke="#e03060" stroke-width="1.200" fill="none"/><rect x="1" y="0.500" width="9.500" height="7.500" fill="#fff" stroke="#8030e0" stroke-width="1.300"/><path d="M3 2.500 l2.700 3.500 l2.700 -3.500" fill="none" stroke="#e02040" stroke-width="1.300"/></svg>
<svg style="left:67.00px;top:308.50px" width="20" height="20" viewBox="0 0 20 20"><path d="M3.500 7.500 h14 v9 h-14z" fill="#d0e0f8" stroke="#000" stroke-width="1.300"/><path d="M3.500 16.500 l14 -9" stroke="#fff" stroke-width="2"/><path d="M5 16.500 v2 M8 16.500 v2 M11 16.500 v2 M14 16.500 v2 M17 16.500 v2" stroke="#000" stroke-width="1.300"/><rect x="14.500" y="3" width="3" height="5" fill="#555" stroke="#000" stroke-width="0.800"/><rect x="1" y="0.500" width="9.500" height="7.500" rx="1" fill="#fff" stroke="#30a040" stroke-width="1.300"/><path d="M3 2.500 l2.700 3.500 l2.700 -3.500" fill="none" stroke="#e02040" stroke-width="1.300"/></svg>
<svg style="left:67.00px;top:329.80px" width="20" height="20" viewBox="0 0 20 20"><rect x="2" y="1.500" width="14" height="14" fill="#fff" stroke="#000" stroke-width="1.400"/><rect x="4.500" y="4" width="9" height="7" fill="#d0d8e8" stroke="#667" stroke-width="0.800"/><path d="M9 8 v6 q0 4 4 4 h3 q2.500 0 2.500 -3 v-4 q-1.500 -1.500 -2 0.500 q-1 -2 -2 0 q-1 -1.500 -1.500 0 v-3.500 q-1 -1.500 -2 0z" fill="#f8dcc0" stroke="#000" stroke-width="0.900"/></svg>
<svg style="left:88.50px;top:351.10px" width="20" height="20" viewBox="0 0 20 20"><path d="M2 6 V2 H6 M14 2 H18 V6 M18 14 V18 H14 M6 18 H2 V14" fill="none" stroke="#20a030" stroke-width="1.700"/><rect x="4.500" y="4.500" width="11" height="11" fill="#e8e8e8" stroke="#000" stroke-width="1.300"/><rect x="7.500" y="7" width="5" height="5.500" fill="#fff" stroke="#000" stroke-width="1.100"/><path d="M9 9 h2.500 v2" fill="none" stroke="#000" stroke-width="0.900"/></svg>
<svg style="left:88.50px;top:372.40px" width="20" height="20" viewBox="0 0 20 20"><path d="M2 6 V2 H6 M14 2 H18 V6 M18 14 V18 H14 M6 18 H2 V14" fill="none" stroke="#20a030" stroke-width="1.700"/><rect x="4.500" y="4.500" width="11" height="11" fill="#e8e8e8" stroke="#000" stroke-width="1.300"/><rect x="12.500" y="7.500" width="3" height="5" fill="#fff" stroke="#000" stroke-width="1"/><path d="M6 6 h4.500 l-1.500 1.500 l3 3 l-1.500 1.500 l-3 -3 l-1.500 1.500z" fill="#e01040"/></svg>
<svg style="left:88.5px;top:394px" width="20" height="3" viewBox="0 0 20 3"><path d="M2 3 v-1.200 h5 M18 3 v-1.200 h-5" fill="none" stroke="#20a030" stroke-width="1.600"/></svg>
<span class="t" style="left:49.00px;top:183.64px;font-size:14.6px;color:#1a1a22;transform-origin:0 0;transform:scaleX(0.8992);">Fruit Sorting System Based on Wei...</span>
<span class="t" style="left:70.50px;top:204.94px;font-size:14.6px;color:#1a1a22;transform-origin:0 0;transform:scaleX(0.9000);">Network Configuration</span>
<span class="t" style="left:91.50px;top:226.24px;font-size:14.6px;color:#1a1a22;transform-origin:0 0;transform:scaleX(0.9141);">Undefined Network</span>
<span class="t" style="left:112.50px;top:247.54px;font-size:14.6px;color:#1a1a22;transform-origin:0 0;transform:scaleX(0.9066);">NewPLC [B0S0 Internal ...</span>
<span class="t" style="left:70.50px;top:268.84px;font-size:14.6px;color:#1a1a22;transform-origin:0 0;transform:scaleX(0.8791);">System Variable</span>
<span class="t" style="left:70.50px;top:290.14px;font-size:14.6px;color:#1a1a22;transform-origin:0 0;transform:scaleX(1.0077);font-weight:bold;">NewPLC(XBC-DxxxE)-Offli...</span>
<span class="t" style="left:91.50px;top:311.44px;font-size:14.6px;color:#1a1a22;transform-origin:0 0;transform:scaleX(0.8972);">Variable/Comment</span>
<span class="t" style="left:91.50px;top:332.74px;font-size:14.6px;color:#1a1a22;transform-origin:0 0;transform:scaleX(0.8729);">Parameter</span>
<span class="t" style="left:112.50px;top:354.04px;font-size:14.6px;color:#1a1a22;transform-origin:0 0;transform:scaleX(0.8896);">Basic Parameter</span>
<span class="t" style="left:112.50px;top:375.34px;font-size:14.6px;color:#1a1a22;transform-origin:0 0;transform:scaleX(0.9107);">I/O Parameter</span>
<div class="b" style="left:274px;top:181px;width:19.5px;height:216px;background:#f0f0f0;"></div>
<div class="b" style="left:274.5px;top:200px;width:18px;height:139px;background:#cdcdcd;"></div>
<svg style="left:274px;top:181px" width="20" height="216" viewBox="0 0 20 216" fill="none" stroke="#505050" stroke-width="1.6">
<path d="M5.5 12 l4 -4 l4 4"/><path d="M5.5 203 l4 4 l4 -4"/></svg>
<div class="b" style="left:0px;top:397px;width:294px;height:28.5px;background:#4d6082;"></div>
<div class="b" style="left:0px;top:397px;width:58px;height:27px;background:#ffffff;"></div>
<span class="t" style="left:8.00px;top:403.20px;font-size:14.3px;color:#1e6cb8;letter-spacing:-0.215px;">Project</span>
<span class="t" style="left:67.50px;top:404.15px;font-size:14px;color:#e6e9f0;letter-spacing:0.242px;">View High-speed Link</span>
<span class="t" style="left:224.00px;top:404.15px;font-size:14px;color:#e6e9f0;letter-spacing:-0.430px;">View P2P</span>
<!-- function pane -->
<div class="b" style="left:0px;top:433.5px;width:294px;height:27.5px;background:#4d6082;"></div>
<span class="t" style="left:5.00px;top:440.70px;font-size:14.3px;color:#ffffff;letter-spacing:0.082px;">Function/FB</span>
<svg style="left:224px;top:438px" width="70" height="20" viewBox="0 0 70 20">
<path d="M4 8 h11 l-5.5 5.5z" fill="#fff"/>
<path d="M30 5.5 h5 M31 5.5 v6 M34.3 5.5 v6 M28.5 11.5 h8 M32.5 11.5 v4.5" stroke="#fff" stroke-width="1.4" fill="none"/>
<path d="M52 6 l8.5 8.5 M60.5 6 l-8.5 8.5" stroke="#fff" stroke-width="1.7" fill="none"/>
</svg>
<div class="b" style="left:0px;top:461px;width:294px;height:502px;background:#f0f0f0;"></div>
<div class="b" style="left:0px;top:463px;width:239px;height:25.5px;background:#cccccc;"></div>
<span class="t" style="left:4.00px;top:469.45px;font-size:14px;color:#838383;letter-spacing:-0.348px;">Most Recently Used</span>
<svg style="left:220px;top:470px" width="14" height="10" viewBox="0 0 14 10"><path d="M2 2.5 l5 5 l5 -5" fill="none" stroke="#b9b9b9" stroke-width="1.2"/></svg>
<div class="b" style="left:243px;top:464px;width:50px;height:26px;background:#cccccc;border:1px solid #bfbfbf;box-sizing:border-box;"></div>
<span class="t" style="left:255.00px;top:470.23px;font-size:14.5px;color:#8b8b8b;letter-spacing:-0.371px;">Edit</span>
<div class="b" style="left:0px;top:495px;width:294px;height:1.5px;background:#a0a0a0;"></div>
<div class="b" style="left:0px;top:495px;width:1.2px;height:468px;background:#a6a6a6;"></div>
<div class="b" style="left:1.2px;top:496.5px;width:291.5px;height:31px;background:#ffffff;"></div>
<div class="b" style="left:288px;top:497px;width:1px;height:30.5px;background:#e5e5e5;"></div>
<span class="t" style="left:9.00px;top:505.65px;font-size:14px;color:#000000;letter-spacing:-0.456px;">Function Name</span><!-- document area -->
<div class="b" style="left:301.4px;top:176.3px;width:1579.5px;height:787px;background:#ffffff;"></div>
<svg style="left:0;top:0" width="1920" height="200" viewBox="0 0 1920 200">
<path d="M301.4 177 L301.4 176.5 L323.5 154.4 L460.6 154.4 L460.6 177 Z" fill="#ffffff"/>
<path d="M460.6 177 V156.5 L463 154.4 H604 V176.3 H460.600 Z" fill="#cdd4e4" stroke="#9aa3b8" stroke-width="1"/>
<path d="M605 176.3 V156.5 L607.5 154.4 H783 V176.300 Z" fill="#cdd4e4" stroke="#9aa3b8" stroke-width="1"/>
<path d="M460.600 154.400 v22" stroke="#9aa1b2" stroke-width="1"/>
<g stroke="#6a6a6a" stroke-width="1.9" fill="none">
<path d="M445 161.500 l8.500 8.500 M453.500 161.500 l-8.500 8.500"/>
<path d="M590.300 161.500 l8.500 8.500 M598.800 161.500 l-8.500 8.500"/>
<path d="M767.800 161.500 l8.500 8.500 M776.300 161.500 l-8.500 8.500"/>
</g>
<path d="M1863.6 162.3 h11 l-5.500 6.200z" fill="#fff"/>
</svg>
<span class="t" style="left:343.00px;top:158.09px;font-size:13.6px;color:#111;font-weight:bold;letter-spacing:0.161px;">NewProgram</span>
<span class="t" style="left:485.30px;top:157.75px;font-size:14px;color:#1c1c2c;letter-spacing:-0.032px;">I/O Parameter</span>
<span class="t" style="left:631.50px;top:157.75px;font-size:14px;color:#1c1c2c;letter-spacing:0.163px;">Variable/Comment</span>
<span class="t" style="left:1118.00px;top:152.59px;font-size:23px;color:#000;font-family:'DejaVu Sans',sans-serif;font-weight:bold;letter-spacing:0.238px;-webkit-text-stroke:0.7px #000;">InstrumentationTools.com</span>
<div class="b" style="left:1852.6px;top:184px;width:21.2px;height:751px;background:#f0f0f0;"></div>
<div class="b" style="left:1852.6px;top:446px;width:18.6px;height:110px;background:#cdcdcd;"></div>
<div class="b" style="left:310px;top:934.5px;width:1564px;height:21px;background:#f0f0f0;"></div>
<div class="b" style="left:331.2px;top:935.8px;width:1410px;height:18px;background:#cdcdcd;"></div>
<svg style="left:0;top:0" width="1920" height="997" viewBox="0 0 1920 997" fill="none" stroke="#505050" stroke-width="2">
<path d="M1857.700 206.800 l4.200 -4.200 l4.200 4.200"/><path d="M1857.700 921.200 l4.200 4.200 l4.200 -4.200"/>
<path d="M323.500 940.500 l-4.200 4.200 l4.200 4.200"/><path d="M1839 940.500 l4.200 4.200 l-4.200 4.200"/>
<g stroke="#bdbdbd" stroke-width="1.300" stroke-dasharray="1.300 1.700"><path d="M1859 952.500 h10 M1862.500 949.500 h6.500 M1866 946.500 h3 M1866 943.500 h3"/></g>
<rect x="1852" y="183.800" width="20.500" height="8" fill="#f0f0f0" stroke="none"/>
<path d="M1851.500 191.700 h21 v-8" stroke="#7a7a7a" stroke-width="1.600"/>
</svg>
<svg class="lad" style="left:0;top:0" width="1920" height="997" viewBox="0 0 1920 997"><rect x="310" y="183.500" width="103.500" height="751" fill="#f0f0f0"/><path d="M415 185 H1675 M415 253.05 H1675 M415 369.20 H1675 M415 486.80 H1675 M415 555.50 H1675 M415 673.10 H1675 M415 735.90 H1675 M415 798.70 H1675 M415 861.50 H1675 M415 924.35 H1675 M541.7 184 V934 M667.7 184 V934 M793.7 184 V934 M919.7 184 V934 M1045.7 184 V934 M1171.7 184 V934 M1297.7 184 V934 M1423.7 184 V934 M1549.7 184 V934" stroke="#e1e1fa" stroke-width="1.200" stroke-dasharray="4 4" fill="none"/><path d="M310 251.85 H413 M310 368.00 H413 M310 485.60 H413 M310 554.30 H413 M310 671.90 H413 M310 734.70 H413 M310 797.50 H413 M310 860.30 H413 M310 923.15 H413" stroke="#8c8c8c" stroke-width="1.900" fill="none"/><path d="M309 955.400 V182.700 H1873.300" stroke="#848484" stroke-width="2" fill="none"/><path d="M413.700 183.700 V933.800 M1676.300 183.700 V933.800" stroke="#000" stroke-width="2.700" fill="none"/><path d="M415 299.2 H465.600 M465.600 288.800 V311 M490.600 288.800 V311 M490.600 299.2 H591.900 M591.900 288.800 V311 M616.900 288.800 V311 M616.900 299.2 H1184.200 M1664 299.2 H1675.500 M541.800 299.2 V416.3 H554.200 M554.200 391.400 V429.800 M906.900 391.400 V429.800 M906.900 416.3 H1598.500 M1627.500 416.3 H1675.500 M1603.500 409.700 Q1595.500 416.300 1603.500 423.500 M1622.500 409.700 Q1630.500 416.300 1622.500 423.500 M415 602.7 H465.600 M465.600 591.300 V613.500 M490.600 591.300 V613.500 M490.600 602.7 H1308.700 M1664 602.7 H1675.500" stroke="#1a1a1a" stroke-width="1.400" fill="none"/><rect x="1186.7" y="270.8" width="479.5" height="38.89999999999998" fill="#8a8a8a"/><rect x="1184.2" y="268.3" width="479.5" height="38.89999999999998" fill="#ffffff" stroke="#1a1a1a" stroke-width="1.400"/><rect x="1311.2" y="572.8" width="355.0" height="38.90000000000009" fill="#8a8a8a"/><rect x="1308.7" y="570.3" width="355.0" height="38.90000000000009" fill="#ffffff" stroke="#1a1a1a" stroke-width="1.400"/></svg>
<span class="t" style="left:326.00px;top:211.08px;font-size:16.8px;color:#1f951f;transform-origin:0 0;transform:scaleX(1.0000);">Comment</span>
<span class="t" style="left:326.00px;top:513.08px;font-size:16.8px;color:#1f951f;transform-origin:0 0;transform:scaleX(1.0000);">Comment</span>
<span class="t" style="left:415.30px;top:211.08px;font-size:16.8px;color:#1f951f;transform-origin:0 0;transform:scaleX(0.9930);">COUNT GREEN FRUIT</span>
<span class="t" style="left:415.30px;top:513.08px;font-size:16.8px;color:#1f951f;transform-origin:0 0;transform:scaleX(0.9970);">RESET COUNT GREEN FRUIT</span>
<span class="t" style="left:386.75px;top:352.28px;font-size:16.8px;color:#1d1df2;transform-origin:0 0;transform:scaleX(0.9500);">51</span>
<span class="t" style="left:386.75px;top:655.28px;font-size:16.8px;color:#1d1df2;transform-origin:0 0;transform:scaleX(0.9500);">64</span>
<span class="t" style="left:453.19px;top:267.77px;font-size:17.4px;color:#0c0c0c;transform-origin:0 0;transform:scaleX(0.8950);">M0000</span>
<span class="t" style="left:580.78px;top:267.77px;font-size:17.4px;color:#0c0c0c;transform-origin:0 0;transform:scaleX(0.8950);">P0004</span>
<span class="t" style="left:598.78px;top:291.37px;font-size:17.4px;color:#0c0c0c;transform-origin:0 0;transform:scaleX(0.8950);">N</span>
<span class="t" style="left:431.84px;top:315.68px;font-size:16.8px;color:#1d1df2;transform-origin:0 0;transform:scaleX(0.9850);">SYSTEM_O</span>
<span class="t" style="left:470.92px;top:335.78px;font-size:16.8px;color:#1d1df2;transform-origin:0 0;transform:scaleX(0.9850);">N</span>
<span class="t" style="left:563.46px;top:315.68px;font-size:16.8px;color:#1d1df2;transform-origin:0 0;transform:scaleX(0.9850);">SENS_GR</span>
<span class="t" style="left:585.99px;top:335.78px;font-size:16.8px;color:#1d1df2;transform-origin:0 0;transform:scaleX(0.9850);">EEN</span>
<span class="t" style="left:1217.36px;top:281.87px;font-size:17.4px;color:#0c0c0c;transform-origin:0 0;transform:scaleX(0.8950);">ADD</span>
<span class="t" style="left:1355.97px;top:281.87px;font-size:17.4px;color:#f21af2;transform-origin:0 0;transform:scaleX(0.8950);">1</span>
<span class="t" style="left:1466.22px;top:281.87px;font-size:17.4px;color:#0c0c0c;transform-origin:0 0;transform:scaleX(0.8950);">M100</span>
<span class="t" style="left:1592.52px;top:281.87px;font-size:17.4px;color:#0c0c0c;transform-origin:0 0;transform:scaleX(0.8950);">M100</span>
<span class="t" style="left:1440.45px;top:316.48px;font-size:16.8px;color:#1d1df2;transform-origin:0 0;transform:scaleX(0.9850);">COUNT_FR</span>
<span class="t" style="left:1471.17px;top:336.58px;font-size:16.8px;color:#1d1df2;transform-origin:0 0;transform:scaleX(0.9850);">UIT</span>
<span class="t" style="left:1566.45px;top:316.48px;font-size:16.8px;color:#1d1df2;transform-origin:0 0;transform:scaleX(0.9850);">COUNT_FR</span>
<span class="t" style="left:1597.17px;top:336.58px;font-size:16.8px;color:#1d1df2;transform-origin:0 0;transform:scaleX(0.9850);">UIT</span>
<span class="t" style="left:599.75px;top:397.07px;font-size:17.4px;color:#0c0c0c;transform-origin:0 0;transform:scaleX(0.8950);">=</span>
<span class="t" style="left:710.52px;top:397.77px;font-size:17.4px;color:#0c0c0c;transform-origin:0 0;transform:scaleX(0.8950);">M100</span>
<span class="t" style="left:847.54px;top:397.77px;font-size:17.4px;color:#f21af2;transform-origin:0 0;transform:scaleX(0.8950);">50</span>
<span class="t" style="left:684.45px;top:432.98px;font-size:16.8px;color:#1d1df2;transform-origin:0 0;transform:scaleX(0.9850);">COUNT_FR</span>
<span class="t" style="left:715.17px;top:453.08px;font-size:16.8px;color:#1d1df2;transform-origin:0 0;transform:scaleX(0.9850);">UIT</span>
<span class="t" style="left:1589.08px;top:385.27px;font-size:17.4px;color:#0c0c0c;transform-origin:0 0;transform:scaleX(0.8950);">P0043</span>
<span class="t" style="left:1571.50px;top:433.98px;font-size:16.8px;color:#1d1df2;transform-origin:0 0;transform:scaleX(0.9850);">ALARM_M</span>
<span class="t" style="left:1600.46px;top:453.28px;font-size:16.8px;color:#1d1df2;transform-origin:0 0;transform:scaleX(0.9850);">AX</span>
<span class="t" style="left:454.48px;top:569.27px;font-size:17.4px;color:#0c0c0c;transform-origin:0 0;transform:scaleX(0.8950);">P0006</span>
<span class="t" style="left:432.70px;top:617.88px;font-size:16.8px;color:#1d1df2;transform-origin:0 0;transform:scaleX(0.9850);">RESET_CO</span>
<span class="t" style="left:448.80px;top:637.88px;font-size:16.8px;color:#1d1df2;transform-origin:0 0;transform:scaleX(0.9850);">UNTER</span>
<span class="t" style="left:1342.26px;top:583.37px;font-size:17.4px;color:#0c0c0c;transform-origin:0 0;transform:scaleX(0.8950);">MOV</span>
<span class="t" style="left:1480.97px;top:583.37px;font-size:17.4px;color:#f21af2;transform-origin:0 0;transform:scaleX(0.8950);">0</span>
<span class="t" style="left:1592.72px;top:583.37px;font-size:17.4px;color:#0c0c0c;transform-origin:0 0;transform:scaleX(0.8950);">M100</span>
<span class="t" style="left:1566.45px;top:618.38px;font-size:16.8px;color:#1d1df2;transform-origin:0 0;transform:scaleX(0.9850);">COUNT_FR</span>
<span class="t" style="left:1597.17px;top:637.88px;font-size:16.8px;color:#1d1df2;transform-origin:0 0;transform:scaleX(0.9850);">UIT</span>
<!-- right strip -->
<div class="b" style="left:1912.5px;top:160px;width:7.5px;height:105.5px;background:#4d6082;"></div>
<div class="b" style="left:1912.5px;top:272px;width:7.5px;height:114.5px;background:#4d6082;"></div>
<span class="t" style="left:1905.3px;top:163.5px;font-size:15.4px;color:#eef0f5;letter-spacing:-0.199px;transform-origin:0 0;transform:rotate(90deg);">System catalog</span>
<span class="t" style="left:1905.3px;top:276.3px;font-size:15.4px;color:#eef0f5;letter-spacing:-0.155px;transform-origin:0 0;transform:rotate(90deg);">EDS information</span>
<!-- bottom tabs -->
<span class="t" style="left:11.50px;top:971.78px;font-size:14.2px;color:#eceef4;letter-spacing:-0.125px;">Result</span>
<div class="b" style="left:8.3px;top:992.3px;width:44.1px;height:5px;background:#4d6082;"></div>
<span class="t" style="left:60.40px;top:971.78px;font-size:14.2px;color:#eceef4;letter-spacing:-0.234px;">Check Program</span>
<div class="b" style="left:57.199999999999996px;top:992.3px;width:100.19999999999999px;height:5px;background:#4d6082;"></div>
<span class="t" style="left:165.60px;top:971.78px;font-size:14.2px;color:#eceef4;letter-spacing:-0.178px;">Find 1</span>
<div class="b" style="left:162.4px;top:992.3px;width:43.0px;height:5px;background:#4d6082;"></div>
<span class="t" style="left:214.00px;top:971.78px;font-size:14.2px;color:#eceef4;letter-spacing:0.022px;">Find 2</span>
<div class="b" style="left:210.8px;top:992.3px;width:44.2px;height:5px;background:#4d6082;"></div>
<span class="t" style="left:263.00px;top:971.78px;font-size:14.2px;color:#eceef4;letter-spacing:0.142px;">Communication</span>
<div class="b" style="left:259.8px;top:992.3px;width:105.1px;height:5px;background:#4d6082;"></div>
<span class="t" style="left:373.00px;top:971.78px;font-size:14.2px;color:#eceef4;letter-spacing:-0.336px;">Cross Reference</span>
<div class="b" style="left:369.8px;top:992.3px;width:106.1px;height:5px;background:#4d6082;"></div>
<span class="t" style="left:484.40px;top:971.78px;font-size:14.2px;color:#eceef4;letter-spacing:-0.354px;">Used Device</span>
<div class="b" style="left:481.2px;top:992.3px;width:81.19999999999999px;height:5px;background:#4d6082;"></div>
<span class="t" style="left:570.30px;top:971.78px;font-size:14.2px;color:#eceef4;letter-spacing:0.150px;">Duplicate Coil</span>
<div class="b" style="left:567.0999999999999px;top:992.3px;width:94.3px;height:5px;background:#4d6082;"></div>
<span class="t" style="left:688.00px;top:971.78px;font-size:14.2px;color:#eceef4;letter-spacing:0.368px;">Monitor 1</span>
<div class="b" style="left:684.8px;top:992.3px;width:67.1px;height:5px;background:#4d6082;"></div>
<span class="t" style="left:760.40px;top:971.78px;font-size:14.2px;color:#eceef4;letter-spacing:0.423px;">Monitor 2</span>
<div class="b" style="left:757.1999999999999px;top:992.3px;width:67.6px;height:5px;background:#4d6082;"></div>
<span class="t" style="left:832.80px;top:971.78px;font-size:14.2px;color:#eceef4;letter-spacing:0.423px;">Monitor 3</span>
<div class="b" style="left:829.5999999999999px;top:992.3px;width:67.6px;height:5px;background:#4d6082;"></div>
<span class="t" style="left:905.20px;top:971.78px;font-size:14.2px;color:#eceef4;letter-spacing:0.423px;">Monitor 4</span>
<div class="b" style="left:902.0px;top:992.3px;width:67.6px;height:5px;background:#4d6082;"></div>
</body></html>
